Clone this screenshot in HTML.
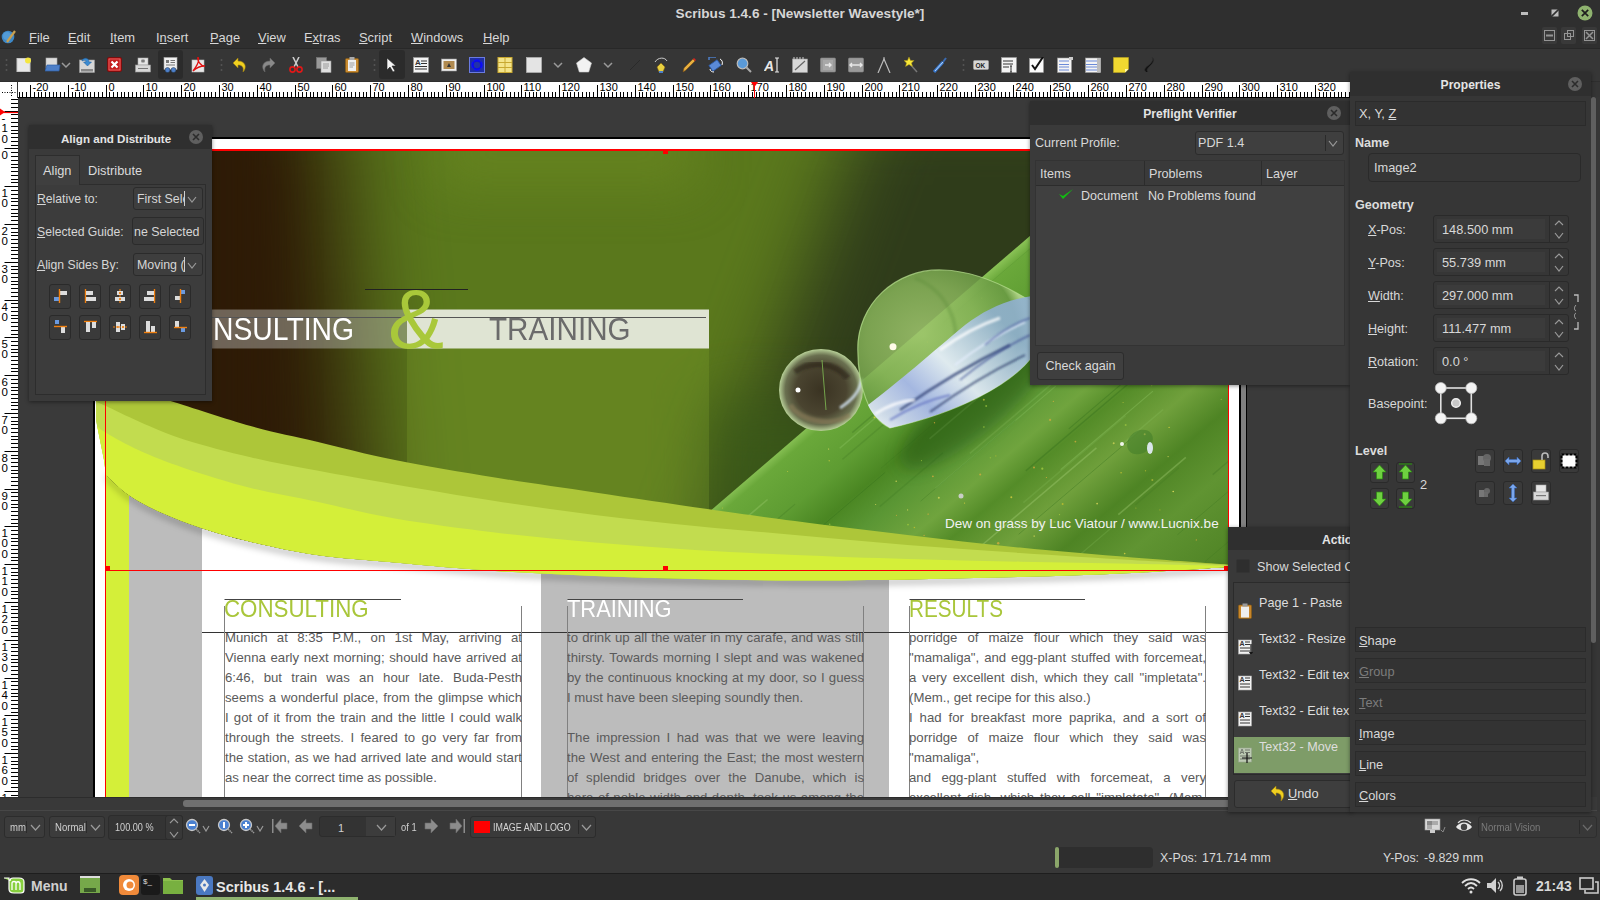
<!DOCTYPE html>
<html><head><meta charset="utf-8">
<style>
*{box-sizing:border-box;margin:0;padding:0}
html,body{width:1600px;height:900px;overflow:hidden;background:#353535;font-family:"Liberation Sans",sans-serif;font-size:13px;color:#dcdcdc}
.a{position:absolute}
#titlebar{left:0;top:0;width:1600px;height:28px;background:#2f2f2f}
#menubar{left:0;top:28px;width:1600px;height:20px;background:#2f2f2f;border-bottom:1px solid #262626}
#toolbar{left:0;top:48px;width:1600px;height:33px;background:#363636}
#hruler{left:18px;top:81px;width:1332px;height:17px;background:#fff}
#corner{left:0;top:81px;width:18px;height:17px;background:#fff}
#vruler{left:0;top:98px;width:18px;height:699px;background:#fff}
#canvas{left:18px;top:98px;width:1332px;height:699px;background:#3a3a3a;overflow:hidden}
#hscroll{left:0;top:797px;width:1600px;height:14px;background:#393939;border-top:1px solid #2a2a2a}
#status{left:0;top:811px;width:1600px;height:62px;background:#383838;border-top:1px solid #474747}
#taskbar{left:0;top:873px;width:1600px;height:27px;background:#2b2b2b;border-top:1px solid #202020}
.menu span{position:absolute;top:2px;font-size:13px;color:#e0e0e0}
.panel{position:absolute;background:#3a3a3a;box-shadow:0 0 4px rgba(0,0,0,.5)}
.ptitle{position:absolute;left:0;top:0;right:0;height:24px;background:#2f2f2f;font-weight:bold;text-align:center;line-height:24px;font-size:12.5px;color:#e8e8e8}
.closeb{position:absolute;width:15px;height:15px;border-radius:50%;background:#6a6a6a}
.closeb:before,.closeb:after{content:"";position:absolute;left:3px;top:7px;width:9px;height:1.5px;background:#2f2f2f;transform:rotate(45deg)}
.closeb:after{transform:rotate(-45deg)}
.combo{position:absolute;background:#3f3f3f;border:1px solid #2c2c2c;border-radius:3px;color:#e0e0e0;padding-left:5px;white-space:nowrap;overflow:hidden}
.field{position:absolute;background:#353535;border:1px solid #2a2a2a;border-radius:3px}
.sec{position:absolute;left:1355px;width:231px;height:24px;border:1px solid #2c2c2c;background:#353535;padding-left:4px;line-height:22px;font-size:13px;color:#e0e0e0}
.coltxt{position:absolute;font-size:13.2px;line-height:20px;color:#5a5a5a;text-align:justify;text-align-last:justify}
.coltxt div{height:20px;white-space:nowrap;overflow:hidden}
</style></head><body>
<div class="a" style="left:0;top:0;width:1600px;height:28px;background:#2f2f2f"></div>
<div class="a" style="left:0;top:5px;width:1600px;text-align:center;font-weight:bold;font-size:13.6px;color:#d6d6d6;line-height:18px">Scribus 1.4.6 - [Newsletter Wavestyle*]</div>
<div class="a" style="left:1521px;top:12px;width:7px;height:3px;background:#bdbdbd"></div>
<svg class="a" style="left:1551px;top:9px" width="8" height="8"><rect x="0.5" y="0.5" width="7" height="7" fill="#bdbdbd"/><path d="M0,8 L8,0" stroke="#2f2f2f" stroke-width="1.6"/></svg>
<svg class="a" style="left:1577px;top:5px" width="16" height="16"><circle cx="8" cy="8" r="7.5" fill="#8fb36f"/><path d="M4.8,4.8 L11.2,11.2 M11.2,4.8 L4.8,11.2" stroke="#1e1e1e" stroke-width="1.7"/></svg>
<div class="a" style="left:0;top:28px;width:1600px;height:20px;background:#2f2f2f"></div>
<div class="a" style="left:0;top:48px;width:1600px;height:1px;background:#282828"></div>
<svg class="a" style="left:1px;top:29px" width="15" height="15"><circle cx="7" cy="8" r="6.3" fill="#3d88c8"/><circle cx="6" cy="7" r="4" fill="#62a8e0" opacity="0.6"/><path d="M6,13 L14,2" stroke="#c8a050" stroke-width="2.2"/></svg>
<div class="a" style="left:29px;top:30px;font-size:12.9px;color:#d8d8d8;line-height:16px;white-space:nowrap"><u>F</u>ile</div>
<div class="a" style="left:68px;top:30px;font-size:12.9px;color:#d8d8d8;line-height:16px;white-space:nowrap"><u>E</u>dit</div>
<div class="a" style="left:110px;top:30px;font-size:12.9px;color:#d8d8d8;line-height:16px;white-space:nowrap"><u>I</u>tem</div>
<div class="a" style="left:156px;top:30px;font-size:12.9px;color:#d8d8d8;line-height:16px;white-space:nowrap">I<u>n</u>sert</div>
<div class="a" style="left:210px;top:30px;font-size:12.9px;color:#d8d8d8;line-height:16px;white-space:nowrap"><u>P</u>age</div>
<div class="a" style="left:258px;top:30px;font-size:12.9px;color:#d8d8d8;line-height:16px;white-space:nowrap"><u>V</u>iew</div>
<div class="a" style="left:304px;top:30px;font-size:12.9px;color:#d8d8d8;line-height:16px;white-space:nowrap">E<u>x</u>tras</div>
<div class="a" style="left:359px;top:30px;font-size:12.9px;color:#d8d8d8;line-height:16px;white-space:nowrap"><u>S</u>cript</div>
<div class="a" style="left:411px;top:30px;font-size:12.9px;color:#d8d8d8;line-height:16px;white-space:nowrap"><u>W</u>indows</div>
<div class="a" style="left:483px;top:30px;font-size:12.9px;color:#d8d8d8;line-height:16px;white-space:nowrap"><u>H</u>elp</div>
<div class="a" style="left:1542px;top:27px;width:15px;height:17px;background:#393939;border-radius:2px"></div>
<div class="a" style="left:1561px;top:27px;width:15px;height:17px;background:#393939;border-radius:2px"></div>
<div class="a" style="left:1582px;top:27px;width:15px;height:17px;background:#393939;border-radius:2px"></div>
<svg class="a" style="left:1542px;top:27px" width="56" height="17"><g stroke="#959595" fill="none" stroke-width="1"><rect x="2.5" y="3.5" width="10" height="10"/><line x1="4" y1="8.5" x2="11" y2="8.5" stroke-width="2"/><rect x="22.5" y="6.5" width="6" height="6"/><rect x="25.5" y="3.5" width="6" height="6"/><rect x="42.5" y="3.5" width="10" height="10"/><path d="M44,5 L51,12 M51,5 L44,12" stroke-width="1.5"/></g></svg>
<div class="a" style="left:0;top:49px;width:1600px;height:32px;background:#363636"></div>
<div class="a" style="left:0;top:81px;width:1600px;height:1px;background:#2e2e2e"></div>
<svg class="a" style="left:0;top:82px" width="1350" height="16" viewBox="0 82 1350 16">
<rect x="0" y="82" width="17" height="16" fill="#fff"/>
<path d="M11.5,85 V96 M2,92.5 H16" stroke="#000" stroke-width="1" stroke-dasharray="1,1.5"/>
<rect x="18" y="82" width="1332" height="16" fill="#fff"/>
<line x1="18" y1="97.5" x2="1350" y2="97.5" stroke="#000" stroke-width="1"/>
<path d="M19.5,92 V98 M22.5,92 V98 M26.5,92 V98 M30.5,85 V98 M34.5,92 V98 M38.5,92 V98 M41.5,92 V98 M45.5,92 V98 M49.5,92 V98 M53.5,92 V98 M56.5,92 V98 M60.5,92 V98 M64.5,92 V98 M68.5,85 V98 M72.5,92 V98 M75.5,92 V98 M79.5,92 V98 M83.5,92 V98 M87.5,92 V98 M90.5,92 V98 M94.5,92 V98 M98.5,92 V98 M102.5,92 V98 M106.5,85 V98 M109.5,92 V98 M113.5,92 V98 M117.5,92 V98 M121.5,92 V98 M124.5,92 V98 M128.5,92 V98 M132.5,92 V98 M136.5,92 V98 M140.5,92 V98 M143.5,85 V98 M147.5,92 V98 M151.5,92 V98 M155.5,92 V98 M159.5,92 V98 M162.5,92 V98 M166.5,92 V98 M170.5,92 V98 M174.5,92 V98 M177.5,92 V98 M181.5,85 V98 M185.5,92 V98 M189.5,92 V98 M193.5,92 V98 M196.5,92 V98 M200.5,92 V98 M204.5,92 V98 M208.5,92 V98 M211.5,92 V98 M215.5,92 V98 M219.5,85 V98 M223.5,92 V98 M227.5,92 V98 M230.5,92 V98 M234.5,92 V98 M238.5,92 V98 M242.5,92 V98 M245.5,92 V98 M249.5,92 V98 M253.5,92 V98 M257.5,85 V98 M261.5,92 V98 M264.5,92 V98 M268.5,92 V98 M272.5,92 V98 M276.5,92 V98 M279.5,92 V98 M283.5,92 V98 M287.5,92 V98 M291.5,92 V98 M295.5,85 V98 M298.5,92 V98 M302.5,92 V98 M306.5,92 V98 M310.5,92 V98 M313.5,92 V98 M317.5,92 V98 M321.5,92 V98 M325.5,92 V98 M329.5,92 V98 M332.5,85 V98 M336.5,92 V98 M340.5,92 V98 M344.5,92 V98 M347.5,92 V98 M351.5,92 V98 M355.5,92 V98 M359.5,92 V98 M363.5,92 V98 M366.5,92 V98 M370.5,85 V98 M374.5,92 V98 M378.5,92 V98 M382.5,92 V98 M385.5,92 V98 M389.5,92 V98 M393.5,92 V98 M397.5,92 V98 M400.5,92 V98 M404.5,92 V98 M408.5,85 V98 M412.5,92 V98 M416.5,92 V98 M419.5,92 V98 M423.5,92 V98 M427.5,92 V98 M431.5,92 V98 M434.5,92 V98 M438.5,92 V98 M442.5,92 V98 M446.5,85 V98 M450.5,92 V98 M453.5,92 V98 M457.5,92 V98 M461.5,92 V98 M465.5,92 V98 M468.5,92 V98 M472.5,92 V98 M476.5,92 V98 M480.5,92 V98 M484.5,85 V98 M487.5,92 V98 M491.5,92 V98 M495.5,92 V98 M499.5,92 V98 M502.5,92 V98 M506.5,92 V98 M510.5,92 V98 M514.5,92 V98 M518.5,92 V98 M521.5,85 V98 M525.5,92 V98 M529.5,92 V98 M533.5,92 V98 M536.5,92 V98 M540.5,92 V98 M544.5,92 V98 M548.5,92 V98 M552.5,92 V98 M555.5,92 V98 M559.5,85 V98 M563.5,92 V98 M567.5,92 V98 M570.5,92 V98 M574.5,92 V98 M578.5,92 V98 M582.5,92 V98 M586.5,92 V98 M589.5,92 V98 M593.5,92 V98 M597.5,85 V98 M601.5,92 V98 M604.5,92 V98 M608.5,92 V98 M612.5,92 V98 M616.5,92 V98 M620.5,92 V98 M623.5,92 V98 M627.5,92 V98 M631.5,92 V98 M635.5,85 V98 M639.5,92 V98 M642.5,92 V98 M646.5,92 V98 M650.5,92 V98 M654.5,92 V98 M657.5,92 V98 M661.5,92 V98 M665.5,92 V98 M669.5,92 V98 M673.5,85 V98 M676.5,92 V98 M680.5,92 V98 M684.5,92 V98 M688.5,92 V98 M691.5,92 V98 M695.5,92 V98 M699.5,92 V98 M703.5,92 V98 M707.5,92 V98 M710.5,85 V98 M714.5,92 V98 M718.5,92 V98 M722.5,92 V98 M725.5,92 V98 M729.5,92 V98 M733.5,92 V98 M737.5,92 V98 M741.5,92 V98 M744.5,92 V98 M748.5,85 V98 M752.5,92 V98 M756.5,92 V98 M759.5,92 V98 M763.5,92 V98 M767.5,92 V98 M771.5,92 V98 M775.5,92 V98 M778.5,92 V98 M782.5,92 V98 M786.5,85 V98 M790.5,92 V98 M793.5,92 V98 M797.5,92 V98 M801.5,92 V98 M805.5,92 V98 M809.5,92 V98 M812.5,92 V98 M816.5,92 V98 M820.5,92 V98 M824.5,85 V98 M827.5,92 V98 M831.5,92 V98 M835.5,92 V98 M839.5,92 V98 M843.5,92 V98 M846.5,92 V98 M850.5,92 V98 M854.5,92 V98 M858.5,92 V98 M862.5,85 V98 M865.5,92 V98 M869.5,92 V98 M873.5,92 V98 M877.5,92 V98 M880.5,92 V98 M884.5,92 V98 M888.5,92 V98 M892.5,92 V98 M896.5,92 V98 M899.5,85 V98 M903.5,92 V98 M907.5,92 V98 M911.5,92 V98 M914.5,92 V98 M918.5,92 V98 M922.5,92 V98 M926.5,92 V98 M930.5,92 V98 M933.5,92 V98 M937.5,85 V98 M941.5,92 V98 M945.5,92 V98 M948.5,92 V98 M952.5,92 V98 M956.5,92 V98 M960.5,92 V98 M964.5,92 V98 M967.5,92 V98 M971.5,92 V98 M975.5,85 V98 M979.5,92 V98 M982.5,92 V98 M986.5,92 V98 M990.5,92 V98 M994.5,92 V98 M998.5,92 V98 M1001.5,92 V98 M1005.5,92 V98 M1009.5,92 V98 M1013.5,85 V98 M1016.5,92 V98 M1020.5,92 V98 M1024.5,92 V98 M1028.5,92 V98 M1032.5,92 V98 M1035.5,92 V98 M1039.5,92 V98 M1043.5,92 V98 M1047.5,92 V98 M1050.5,85 V98 M1054.5,92 V98 M1058.5,92 V98 M1062.5,92 V98 M1066.5,92 V98 M1069.5,92 V98 M1073.5,92 V98 M1077.5,92 V98 M1081.5,92 V98 M1084.5,92 V98 M1088.5,85 V98 M1092.5,92 V98 M1096.5,92 V98 M1100.5,92 V98 M1103.5,92 V98 M1107.5,92 V98 M1111.5,92 V98 M1115.5,92 V98 M1119.5,92 V98 M1122.5,92 V98 M1126.5,85 V98 M1130.5,92 V98 M1134.5,92 V98 M1137.5,92 V98 M1141.5,92 V98 M1145.5,92 V98 M1149.5,92 V98 M1153.5,92 V98 M1156.5,92 V98 M1160.5,92 V98 M1164.5,85 V98 M1168.5,92 V98 M1171.5,92 V98 M1175.5,92 V98 M1179.5,92 V98 M1183.5,92 V98 M1187.5,92 V98 M1190.5,92 V98 M1194.5,92 V98 M1198.5,92 V98 M1202.5,85 V98 M1205.5,92 V98 M1209.5,92 V98 M1213.5,92 V98 M1217.5,92 V98 M1221.5,92 V98 M1224.5,92 V98 M1228.5,92 V98 M1232.5,92 V98 M1236.5,92 V98 M1239.5,85 V98 M1243.5,92 V98 M1247.5,92 V98 M1251.5,92 V98 M1255.5,92 V98 M1258.5,92 V98 M1262.5,92 V98 M1266.5,92 V98 M1270.5,92 V98 M1273.5,92 V98 M1277.5,85 V98 M1281.5,92 V98 M1285.5,92 V98 M1289.5,92 V98 M1292.5,92 V98 M1296.5,92 V98 M1300.5,92 V98 M1304.5,92 V98 M1307.5,92 V98 M1311.5,92 V98 M1315.5,85 V98 M1319.5,92 V98 M1323.5,92 V98 M1326.5,92 V98 M1330.5,92 V98 M1334.5,92 V98 M1338.5,92 V98 M1341.5,92 V98 M1345.5,92 V98 M1349.5,92 V98 " stroke="#000" stroke-width="1"/>
<text x="32.5" y="91.2" font-size="11" fill="#000" font-family="Liberation Sans">-20</text>
<text x="70.5" y="91.2" font-size="11" fill="#000" font-family="Liberation Sans">-10</text>
<text x="108.5" y="91.2" font-size="11" fill="#000" font-family="Liberation Sans">0</text>
<text x="145.5" y="91.2" font-size="11" fill="#000" font-family="Liberation Sans">10</text>
<text x="183.5" y="91.2" font-size="11" fill="#000" font-family="Liberation Sans">20</text>
<text x="221.5" y="91.2" font-size="11" fill="#000" font-family="Liberation Sans">30</text>
<text x="259.5" y="91.2" font-size="11" fill="#000" font-family="Liberation Sans">40</text>
<text x="297.5" y="91.2" font-size="11" fill="#000" font-family="Liberation Sans">50</text>
<text x="334.5" y="91.2" font-size="11" fill="#000" font-family="Liberation Sans">60</text>
<text x="372.5" y="91.2" font-size="11" fill="#000" font-family="Liberation Sans">70</text>
<text x="410.5" y="91.2" font-size="11" fill="#000" font-family="Liberation Sans">80</text>
<text x="448.5" y="91.2" font-size="11" fill="#000" font-family="Liberation Sans">90</text>
<text x="486.5" y="91.2" font-size="11" fill="#000" font-family="Liberation Sans">100</text>
<text x="523.5" y="91.2" font-size="11" fill="#000" font-family="Liberation Sans">110</text>
<text x="561.5" y="91.2" font-size="11" fill="#000" font-family="Liberation Sans">120</text>
<text x="599.5" y="91.2" font-size="11" fill="#000" font-family="Liberation Sans">130</text>
<text x="637.5" y="91.2" font-size="11" fill="#000" font-family="Liberation Sans">140</text>
<text x="675.5" y="91.2" font-size="11" fill="#000" font-family="Liberation Sans">150</text>
<text x="712.5" y="91.2" font-size="11" fill="#000" font-family="Liberation Sans">160</text>
<text x="750.5" y="91.2" font-size="11" fill="#000" font-family="Liberation Sans">170</text>
<text x="788.5" y="91.2" font-size="11" fill="#000" font-family="Liberation Sans">180</text>
<text x="826.5" y="91.2" font-size="11" fill="#000" font-family="Liberation Sans">190</text>
<text x="864.5" y="91.2" font-size="11" fill="#000" font-family="Liberation Sans">200</text>
<text x="901.5" y="91.2" font-size="11" fill="#000" font-family="Liberation Sans">210</text>
<text x="939.5" y="91.2" font-size="11" fill="#000" font-family="Liberation Sans">220</text>
<text x="977.5" y="91.2" font-size="11" fill="#000" font-family="Liberation Sans">230</text>
<text x="1015.5" y="91.2" font-size="11" fill="#000" font-family="Liberation Sans">240</text>
<text x="1052.5" y="91.2" font-size="11" fill="#000" font-family="Liberation Sans">250</text>
<text x="1090.5" y="91.2" font-size="11" fill="#000" font-family="Liberation Sans">260</text>
<text x="1128.5" y="91.2" font-size="11" fill="#000" font-family="Liberation Sans">270</text>
<text x="1166.5" y="91.2" font-size="11" fill="#000" font-family="Liberation Sans">280</text>
<text x="1204.5" y="91.2" font-size="11" fill="#000" font-family="Liberation Sans">290</text>
<text x="1241.5" y="91.2" font-size="11" fill="#000" font-family="Liberation Sans">300</text>
<text x="1279.5" y="91.2" font-size="11" fill="#000" font-family="Liberation Sans">310</text>
<text x="1317.5" y="91.2" font-size="11" fill="#000" font-family="Liberation Sans">320</text>
<path d="M751,82 L758,82 L754.5,87 Z" fill="#f00"/><line x1="754.5" y1="82" x2="754.5" y2="98" stroke="#f00"/>
</svg>
<svg class="a" style="left:0;top:98px" width="18" height="699" viewBox="0 98 18 699">
<rect x="0" y="98" width="18" height="699" fill="#fff"/>
<path d="M11,99.5 H18 M11,103.5 H18 M11,107.5 H18 M4.5,111.5 H18 M11,114.5 H18 M11,118.5 H18 M11,122.5 H18 M11,126.5 H18 M11,130.5 H18 M11,133.5 H18 M11,137.5 H18 M11,141.5 H18 M11,145.5 H18 M4.5,148.5 H18 M11,152.5 H18 M11,156.5 H18 M11,160.5 H18 M11,164.5 H18 M11,167.5 H18 M11,171.5 H18 M11,175.5 H18 M11,179.5 H18 M11,182.5 H18 M4.5,186.5 H18 M11,190.5 H18 M11,194.5 H18 M11,198.5 H18 M11,201.5 H18 M11,205.5 H18 M11,209.5 H18 M11,213.5 H18 M11,216.5 H18 M11,220.5 H18 M4.5,224.5 H18 M11,228.5 H18 M11,232.5 H18 M11,235.5 H18 M11,239.5 H18 M11,243.5 H18 M11,247.5 H18 M11,250.5 H18 M11,254.5 H18 M11,258.5 H18 M4.5,262.5 H18 M11,266.5 H18 M11,269.5 H18 M11,273.5 H18 M11,277.5 H18 M11,281.5 H18 M11,284.5 H18 M11,288.5 H18 M11,292.5 H18 M11,296.5 H18 M4.5,300.5 H18 M11,303.5 H18 M11,307.5 H18 M11,311.5 H18 M11,315.5 H18 M11,318.5 H18 M11,322.5 H18 M11,326.5 H18 M11,330.5 H18 M11,334.5 H18 M4.5,337.5 H18 M11,341.5 H18 M11,345.5 H18 M11,349.5 H18 M11,352.5 H18 M11,356.5 H18 M11,360.5 H18 M11,364.5 H18 M11,368.5 H18 M11,371.5 H18 M4.5,375.5 H18 M11,379.5 H18 M11,383.5 H18 M11,387.5 H18 M11,390.5 H18 M11,394.5 H18 M11,398.5 H18 M11,402.5 H18 M11,405.5 H18 M11,409.5 H18 M4.5,413.5 H18 M11,417.5 H18 M11,421.5 H18 M11,424.5 H18 M11,428.5 H18 M11,432.5 H18 M11,436.5 H18 M11,439.5 H18 M11,443.5 H18 M11,447.5 H18 M4.5,451.5 H18 M11,455.5 H18 M11,458.5 H18 M11,462.5 H18 M11,466.5 H18 M11,470.5 H18 M11,473.5 H18 M11,477.5 H18 M11,481.5 H18 M11,485.5 H18 M4.5,489.5 H18 M11,492.5 H18 M11,496.5 H18 M11,500.5 H18 M11,504.5 H18 M11,507.5 H18 M11,511.5 H18 M11,515.5 H18 M11,519.5 H18 M11,523.5 H18 M4.5,526.5 H18 M11,530.5 H18 M11,534.5 H18 M11,538.5 H18 M11,541.5 H18 M11,545.5 H18 M11,549.5 H18 M11,553.5 H18 M11,557.5 H18 M11,560.5 H18 M4.5,564.5 H18 M11,568.5 H18 M11,572.5 H18 M11,575.5 H18 M11,579.5 H18 M11,583.5 H18 M11,587.5 H18 M11,591.5 H18 M11,594.5 H18 M11,598.5 H18 M4.5,602.5 H18 M11,606.5 H18 M11,609.5 H18 M11,613.5 H18 M11,617.5 H18 M11,621.5 H18 M11,625.5 H18 M11,628.5 H18 M11,632.5 H18 M11,636.5 H18 M4.5,640.5 H18 M11,644.5 H18 M11,647.5 H18 M11,651.5 H18 M11,655.5 H18 M11,659.5 H18 M11,662.5 H18 M11,666.5 H18 M11,670.5 H18 M11,674.5 H18 M4.5,678.5 H18 M11,681.5 H18 M11,685.5 H18 M11,689.5 H18 M11,693.5 H18 M11,696.5 H18 M11,700.5 H18 M11,704.5 H18 M11,708.5 H18 M11,712.5 H18 M4.5,715.5 H18 M11,719.5 H18 M11,723.5 H18 M11,727.5 H18 M11,730.5 H18 M11,734.5 H18 M11,738.5 H18 M11,742.5 H18 M11,746.5 H18 M11,749.5 H18 M4.5,753.5 H18 M11,757.5 H18 M11,761.5 H18 M11,764.5 H18 M11,768.5 H18 M11,772.5 H18 M11,776.5 H18 M11,780.5 H18 M11,783.5 H18 M11,787.5 H18 M4.5,791.5 H18 M11,795.5 H18 " stroke="#000" stroke-width="1"/>
<text x="1.5" y="121.5" font-size="11.5" fill="#000" font-family="Liberation Sans">-</text>
<text x="1.5" y="132.1" font-size="11.5" fill="#000" font-family="Liberation Sans">1</text>
<text x="1.5" y="142.7" font-size="11.5" fill="#000" font-family="Liberation Sans">0</text>
<text x="1.5" y="158.5" font-size="11.5" fill="#000" font-family="Liberation Sans">0</text>
<text x="1.5" y="196.5" font-size="11.5" fill="#000" font-family="Liberation Sans">1</text>
<text x="1.5" y="207.1" font-size="11.5" fill="#000" font-family="Liberation Sans">0</text>
<text x="1.5" y="234.5" font-size="11.5" fill="#000" font-family="Liberation Sans">2</text>
<text x="1.5" y="245.1" font-size="11.5" fill="#000" font-family="Liberation Sans">0</text>
<text x="1.5" y="272.5" font-size="11.5" fill="#000" font-family="Liberation Sans">3</text>
<text x="1.5" y="283.1" font-size="11.5" fill="#000" font-family="Liberation Sans">0</text>
<text x="1.5" y="310.5" font-size="11.5" fill="#000" font-family="Liberation Sans">4</text>
<text x="1.5" y="321.1" font-size="11.5" fill="#000" font-family="Liberation Sans">0</text>
<text x="1.5" y="347.5" font-size="11.5" fill="#000" font-family="Liberation Sans">5</text>
<text x="1.5" y="358.1" font-size="11.5" fill="#000" font-family="Liberation Sans">0</text>
<text x="1.5" y="385.5" font-size="11.5" fill="#000" font-family="Liberation Sans">6</text>
<text x="1.5" y="396.1" font-size="11.5" fill="#000" font-family="Liberation Sans">0</text>
<text x="1.5" y="423.5" font-size="11.5" fill="#000" font-family="Liberation Sans">7</text>
<text x="1.5" y="434.1" font-size="11.5" fill="#000" font-family="Liberation Sans">0</text>
<text x="1.5" y="461.5" font-size="11.5" fill="#000" font-family="Liberation Sans">8</text>
<text x="1.5" y="472.1" font-size="11.5" fill="#000" font-family="Liberation Sans">0</text>
<text x="1.5" y="499.5" font-size="11.5" fill="#000" font-family="Liberation Sans">9</text>
<text x="1.5" y="510.1" font-size="11.5" fill="#000" font-family="Liberation Sans">0</text>
<text x="1.5" y="536.5" font-size="11.5" fill="#000" font-family="Liberation Sans">1</text>
<text x="1.5" y="547.1" font-size="11.5" fill="#000" font-family="Liberation Sans">0</text>
<text x="1.5" y="557.7" font-size="11.5" fill="#000" font-family="Liberation Sans">0</text>
<text x="1.5" y="574.5" font-size="11.5" fill="#000" font-family="Liberation Sans">1</text>
<text x="1.5" y="585.1" font-size="11.5" fill="#000" font-family="Liberation Sans">1</text>
<text x="1.5" y="595.7" font-size="11.5" fill="#000" font-family="Liberation Sans">0</text>
<text x="1.5" y="612.5" font-size="11.5" fill="#000" font-family="Liberation Sans">1</text>
<text x="1.5" y="623.1" font-size="11.5" fill="#000" font-family="Liberation Sans">2</text>
<text x="1.5" y="633.7" font-size="11.5" fill="#000" font-family="Liberation Sans">0</text>
<text x="1.5" y="650.5" font-size="11.5" fill="#000" font-family="Liberation Sans">1</text>
<text x="1.5" y="661.1" font-size="11.5" fill="#000" font-family="Liberation Sans">3</text>
<text x="1.5" y="671.7" font-size="11.5" fill="#000" font-family="Liberation Sans">0</text>
<text x="1.5" y="688.5" font-size="11.5" fill="#000" font-family="Liberation Sans">1</text>
<text x="1.5" y="699.1" font-size="11.5" fill="#000" font-family="Liberation Sans">4</text>
<text x="1.5" y="709.7" font-size="11.5" fill="#000" font-family="Liberation Sans">0</text>
<text x="1.5" y="725.5" font-size="11.5" fill="#000" font-family="Liberation Sans">1</text>
<text x="1.5" y="736.1" font-size="11.5" fill="#000" font-family="Liberation Sans">5</text>
<text x="1.5" y="746.7" font-size="11.5" fill="#000" font-family="Liberation Sans">0</text>
<text x="1.5" y="763.5" font-size="11.5" fill="#000" font-family="Liberation Sans">1</text>
<text x="1.5" y="774.1" font-size="11.5" fill="#000" font-family="Liberation Sans">6</text>
<text x="1.5" y="784.7" font-size="11.5" fill="#000" font-family="Liberation Sans">0</text>
<text x="1.5" y="801.5" font-size="11.5" fill="#000" font-family="Liberation Sans">1</text>
<text x="1.5" y="812.1" font-size="11.5" fill="#000" font-family="Liberation Sans">7</text>
<text x="1.5" y="822.7" font-size="11.5" fill="#000" font-family="Liberation Sans">0</text>
<path d="M0,108.5 L5,112 L0,115.5 Z" fill="#f00"/><line x1="0" y1="112.5" x2="18" y2="112.5" stroke="#f00" stroke-width="1.2"/>
</svg>
<div class="a" style="left:158px;top:50px;width:25px;height:29px;background:#2b2b2b;border-radius:3px"></div>
<div class="a" style="left:379px;top:50px;width:26px;height:29px;background:#2b2b2b;border-radius:3px"></div>
<svg class="a" style="left:16px;top:57px" width="16" height="16" viewBox="0 0 16 16"><rect x="1" y="1.5" width="13" height="13" fill="#e8e8e8" stroke="#c8c8c8"/><circle cx="12" cy="3.5" r="3" fill="#f4e640"/></svg>
<svg class="a" style="left:45px;top:57px" width="16" height="16" viewBox="0 0 16 16"><rect x="1" y="1" width="11" height="10" fill="#ddd" stroke="#aaa" stroke-width=".6"/><path d="M0,14 L2,8 L15,8 L14,14 Z" fill="#4d7fc8" stroke="#2d5fa8" stroke-width=".7"/></svg>
<svg class="a" style="left:79px;top:57px" width="16" height="16" viewBox="0 0 16 16"><rect x="0.5" y="3" width="15" height="12.5" fill="#d6d6d6" stroke="#999" stroke-width=".6"/><rect x="2" y="12" width="12" height="2.5" fill="#888"/><path d="M3,3 C6,0 10,1 10,5 L12.5,5 L8.5,9 L4.5,5 L7,5 C7,3 5,3 3,4 Z" fill="#3a8ad0" stroke="#1a5a9a" stroke-width=".5"/></svg>
<svg class="a" style="left:107px;top:57px" width="16" height="16" viewBox="0 0 16 16"><rect x="0.5" y="0.5" width="14" height="14" rx="1.5" fill="#c41c1c" stroke="#7a0e0e"/><rect x="2" y="2" width="11" height="11" fill="none" stroke="#e88" stroke-width=".6"/><path d="M4.5,4.5 L10.5,10.5 M10.5,4.5 L4.5,10.5" stroke="#fff" stroke-width="2.2"/></svg>
<svg class="a" style="left:135px;top:57px" width="16" height="16" viewBox="0 0 16 16"><rect x="3" y="1" width="10" height="7" fill="#e6e6e6" stroke="#aaa" stroke-width=".6"/><path d="M8,2 V6 M6,3 L10,5 M10,3 L6,5" stroke="#666" stroke-width=".8"/><rect x="0.5" y="8" width="15" height="7" fill="#d8d8d8" stroke="#999" stroke-width=".6"/><rect x="3" y="11" width="10" height="1" fill="#777"/></svg>
<svg class="a" style="left:163px;top:57px" width="16" height="16" viewBox="0 0 16 16"><rect x="1" y="0.5" width="13" height="12" fill="#f0f0f0" stroke="#aaa" stroke-width=".6"/><rect x="3" y="3" width="3" height="3" fill="#777"/><path d="M7.5,3.5 H12 M7.5,5.5 H12 M3,8 H12" stroke="#777" stroke-width="1"/><circle cx="4.5" cy="13" r="2.5" fill="#4d7fc8" stroke="#234" stroke-width=".5"/><circle cx="10.5" cy="13" r="2.5" fill="#4d7fc8" stroke="#234" stroke-width=".5"/></svg>
<svg class="a" style="left:191px;top:57px" width="16" height="16" viewBox="0 0 16 16"><rect x="1" y="3" width="12" height="12" fill="#e8e8e8" stroke="#bbb" stroke-width=".6"/><path d="M2,14 C6,9 9,4 7,0 C6,3 9,9 14,9 C10,9 5,11 2,14" fill="none" stroke="#e01010" stroke-width="1.3"/></svg>
<svg class="a" style="left:232px;top:57px" width="16" height="16" viewBox="0 0 16 16"><path d="M6,1 L1,6 L6,11 L6,8 C10,8 12,10 11,15 C15,11 14,4 6,4 Z" fill="#f0d020" stroke="#a08010" stroke-width=".6"/></svg>
<svg class="a" style="left:260px;top:57px" width="16" height="16" viewBox="0 0 16 16"><path d="M10,1 L15,6 L10,11 L10,8 C6,8 4,10 5,15 C1,11 2,4 10,4 Z" fill="#8a8a8a" stroke="#666" stroke-width=".6"/></svg>
<svg class="a" style="left:288px;top:57px" width="16" height="16" viewBox="0 0 16 16"><path d="M5,0 L10,10 M11,0 L6,10" stroke="#ccc" stroke-width="1.6"/><circle cx="4.5" cy="12.5" r="2.6" fill="none" stroke="#e01818" stroke-width="1.6"/><circle cx="11.5" cy="12.5" r="2.6" fill="none" stroke="#e01818" stroke-width="1.6"/></svg>
<svg class="a" style="left:316px;top:57px" width="16" height="16" viewBox="0 0 16 16"><rect x="0.5" y="0.5" width="10" height="11" fill="#999" stroke="#777" stroke-width=".6"/><rect x="5" y="4" width="10" height="11.5" fill="#e0e0e0" stroke="#999" stroke-width=".6"/><path d="M7,7 H13 M7,9 H13 M7,11 H12" stroke="#888" stroke-width=".8"/></svg>
<svg class="a" style="left:344px;top:57px" width="16" height="16" viewBox="0 0 16 16"><rect x="1.5" y="1.5" width="13" height="14" rx="1" fill="#c88a30" stroke="#8a5a10" stroke-width=".6"/><rect x="4" y="3" width="8" height="11" fill="#f0f0f0"/><rect x="5.5" y="0" width="5" height="3" fill="#aaa"/><path d="M5.5,6 H10.5 M5.5,8 H10.5 M5.5,10 H9" stroke="#888" stroke-width=".8"/></svg>
<svg class="a" style="left:384px;top:57px" width="16" height="16" viewBox="0 0 16 16"><path d="M3,1 L3,13 L6,10 L9,15 L11,14 L8,9 L12,9 Z" fill="#f4f4f4" stroke="#222" stroke-width=".6"/></svg>
<svg class="a" style="left:413px;top:57px" width="16" height="16" viewBox="0 0 16 16"><rect x="0.5" y="0.5" width="15" height="15" fill="#f4f4f4" stroke="#999" stroke-width=".6"/><text x="2" y="8" font-size="8" font-weight="bold" fill="#333" font-family="Liberation Sans">A</text><path d="M8,4 H14 M8,6.5 H14 M2,9.5 H14 M2,12 H14" stroke="#333" stroke-width="1"/></svg>
<svg class="a" style="left:441px;top:57px" width="16" height="16" viewBox="0 0 16 16"><rect x="0.5" y="2" width="15" height="12" fill="#f0f0f0" stroke="#999" stroke-width=".6"/><rect x="2.5" y="4" width="11" height="8" fill="#b08a50"/><path d="M6,10 L8,6 L10,10 Z" fill="#333"/></svg>
<svg class="a" style="left:469px;top:57px" width="16" height="16" viewBox="0 0 16 16"><rect x="0.5" y="0.5" width="15" height="15" fill="#2030a0" stroke="#6a7ae0" stroke-width="1"/><circle cx="8" cy="8" r="4.5" fill="none" stroke="#1010ff" stroke-width="2.5"/><rect x="4" y="4" width="8" height="8" fill="#2030a0"/><circle cx="8" cy="8" r="4" fill="#2232a8" stroke="#0a0af0" stroke-width="1.5"/></svg>
<svg class="a" style="left:497px;top:57px" width="16" height="16" viewBox="0 0 16 16"><rect x="1" y="0.5" width="14" height="15" fill="#f4e48a" stroke="#c8a830" stroke-width="1"/><path d="M8,1 V15 M1,5.5 H15 M1,10.5 H15" stroke="#c8a830" stroke-width="1"/></svg>
<svg class="a" style="left:526px;top:57px" width="16" height="16" viewBox="0 0 16 16"><rect x="0.5" y="0.5" width="15" height="15" fill="#e4e4e4" stroke="#bbb" stroke-width=".6"/></svg>
<svg class="a" style="left:576px;top:57px" width="16" height="16" viewBox="0 0 16 16"><path d="M8,0.5 L15.5,6 L12.7,15 L3.3,15 L0.5,6 Z" fill="#f2f2f2" stroke="#ccc" stroke-width=".6"/></svg>
<svg class="a" style="left:627px;top:57px" width="16" height="16" viewBox="0 0 16 16"><path d="M3,13 L13,3" stroke="#2a2a2a" stroke-width="1"/></svg>
<svg class="a" style="left:653px;top:57px" width="16" height="16" viewBox="0 0 16 16"><path d="M2,5 C5,0 12,0 14,4" fill="none" stroke="#ccc" stroke-width="1"/><path d="M8,6 L12,10 L10,15 L6,15 L4,10 Z" fill="#e8d040" stroke="#806010" stroke-width=".6"/><rect x="6" y="14" width="4" height="2" fill="#4d7fc8"/></svg>
<svg class="a" style="left:681px;top:57px" width="16" height="16" viewBox="0 0 16 16"><path d="M2,15 L3,11 L12,2 L14,4 L5,13 Z" fill="#e8b040" stroke="#805010" stroke-width=".6"/><path d="M12,2 L14,4 L15,3 L13,1 Z" fill="#e02020"/></svg>
<svg class="a" style="left:708px;top:57px" width="16" height="16" viewBox="0 0 16 16"><rect x="2" y="5" width="10" height="7" transform="rotate(-35 7 8.5)" fill="#5a8ad8" stroke="#2a5aa8" stroke-width=".8"/><path d="M1,3 L1,0 L8,0" stroke="#4d7fc8" stroke-width="1.5" fill="none"/><path d="M12,2 C14,3 15,5 14,8" stroke="#fff" stroke-width="1" fill="none"/><path d="M2,12 C2,14 4,15 6,15" stroke="#fff" stroke-width="1" fill="none"/></svg>
<svg class="a" style="left:736px;top:57px" width="16" height="16" viewBox="0 0 16 16"><circle cx="6.5" cy="6.5" r="5.3" fill="#5a9ad8" stroke="#bbb" stroke-width="1.2"/><path d="M10.5,10.5 L15,15" stroke="#aaa" stroke-width="2"/></svg>
<svg class="a" style="left:764px;top:57px" width="16" height="16" viewBox="0 0 16 16"><text x="0" y="14" font-size="14" font-weight="bold" font-style="italic" fill="#e8e8e8" font-family="Liberation Sans">A</text><path d="M11,1 H15 M13,1 V15 M11,15 H15" stroke="#e8e8e8" stroke-width="1.2"/></svg>
<svg class="a" style="left:792px;top:57px" width="16" height="16" viewBox="0 0 16 16"><rect x="0.5" y="2" width="15" height="13.5" fill="#d8d8d8" stroke="#999" stroke-width=".6"/><path d="M2,0 V3 M5,0 V3 M8,0 V3 M11,0 V3" stroke="#ccc"/><path d="M3,13 L13,4" stroke="#666" stroke-width="1.2"/></svg>
<svg class="a" style="left:820px;top:57px" width="16" height="16" viewBox="0 0 16 16"><rect x="0.5" y="1" width="15" height="14" rx="1" fill="#9a9a9a" stroke="#888" stroke-width=".6"/><rect x="3" y="3" width="10" height="10" fill="#a8a8a8"/><path d="M5,8 H11 M9,6 L11,8 L9,10" stroke="#e8e8e8" stroke-width="1.4" fill="none"/></svg>
<svg class="a" style="left:848px;top:57px" width="16" height="16" viewBox="0 0 16 16"><rect x="0.5" y="1" width="15" height="14" rx="1" fill="#9a9a9a" stroke="#888" stroke-width=".6"/><path d="M2,8 H14 M4,6 L2,8 L4,10 M12,6 L14,8 L12,10" stroke="#e8e8e8" stroke-width="1.4" fill="none"/></svg>
<svg class="a" style="left:876px;top:57px" width="16" height="16" viewBox="0 0 16 16"><path d="M2,16 L8,2 L14,16" stroke="#bbb" stroke-width="1.2" fill="none"/><path d="M8,0 V4" stroke="#bbb"/></svg>
<svg class="a" style="left:904px;top:57px" width="16" height="16" viewBox="0 0 16 16"><path d="M6,7 L13,15" stroke="#777" stroke-width="1.5"/><path d="M5,0 L6.5,3.5 L10,3.5 L7.5,6 L8.5,9.5 L5,7.5 L1.5,9.5 L2.5,6 L0,3.5 L3.5,3.5 Z" fill="#f8e838" stroke="#a89010" stroke-width=".5"/></svg>
<svg class="a" style="left:932px;top:57px" width="16" height="16" viewBox="0 0 16 16"><path d="M2,15 L11,5" stroke="#3a7ad0" stroke-width="3"/><path d="M3,14 L11,5" stroke="#bcd8f8" stroke-width="1"/><path d="M11,5 L14,1" stroke="#3a6ab0" stroke-width="2"/></svg>
<svg class="a" style="left:973px;top:57px" width="16" height="16" viewBox="0 0 16 16"><rect x="0.5" y="3.5" width="15" height="9" rx="1" fill="#d8d8d8" stroke="#aaa" stroke-width=".6"/><text x="2.5" y="10.5" font-size="6.5" font-weight="bold" fill="#222" font-family="Liberation Sans">OK</text></svg>
<svg class="a" style="left:1001px;top:57px" width="16" height="16" viewBox="0 0 16 16"><rect x="0.5" y="0.5" width="15" height="15" fill="#f4f4f4" stroke="#999" stroke-width=".6"/><path d="M2,4 H12 M2,7 H12 M2,10 H8" stroke="#333" stroke-width="1"/><path d="M10,9 V15 M9,9 H11 M9,15 H11" stroke="#333" stroke-width="1"/></svg>
<svg class="a" style="left:1029px;top:57px" width="16" height="16" viewBox="0 0 16 16"><rect x="0.5" y="1.5" width="14" height="14" fill="#fafafa" stroke="#999" stroke-width=".6"/><path d="M3,8 L6,12 L14,0" stroke="#111" stroke-width="2" fill="none"/></svg>
<svg class="a" style="left:1057px;top:57px" width="16" height="16" viewBox="0 0 16 16"><rect x="0.5" y="1" width="14" height="14.5" fill="#f4f4f4" stroke="#999" stroke-width=".6"/><rect x="12" y="0" width="4" height="3" fill="#ccc"/><path d="M2,4 H12 M2,7.5 H12 M2,10 H12 M2,13 H12" stroke="#6a8ad8" stroke-width="1.2"/></svg>
<svg class="a" style="left:1085px;top:57px" width="16" height="16" viewBox="0 0 16 16"><rect x="0.5" y="1" width="15" height="14.5" fill="#f4f4f4" stroke="#999" stroke-width=".6"/><path d="M1,4 H12 M1,7.5 H12 M1,10 H12 M1,13 H12" stroke="#6a8ad8" stroke-width="1.2"/><rect x="12" y="1" width="3.5" height="14.5" fill="#bbb"/></svg>
<svg class="a" style="left:1113px;top:57px" width="16" height="16" viewBox="0 0 16 16"><path d="M0.5,0.5 H15.5 V12 L12,15.5 H0.5 Z" fill="#f0d830" stroke="#c0a820" stroke-width=".6"/><path d="M12,15.5 V12 H15.5" fill="#fff8b0"/></svg>
<svg class="a" style="left:1142px;top:57px" width="16" height="16" viewBox="0 0 16 16"><path d="M4,15 C0,12 6,9 8,7 C10,5 12,2 10,0 C14,3 10,7 8,9 C6,11 4,13 6,15" fill="#111" stroke="#333" stroke-width=".6"/></svg>
<svg class="a" style="left:61px;top:62px" width="10" height="7"><path d="M1,1 L5,5 L9,1" stroke="#9a9a9a" stroke-width="1.5" fill="none"/></svg>
<svg class="a" style="left:553px;top:62px" width="10" height="7"><path d="M1,1 L5,5 L9,1" stroke="#9a9a9a" stroke-width="1.5" fill="none"/></svg>
<svg class="a" style="left:603px;top:62px" width="10" height="7"><path d="M1,1 L5,5 L9,1" stroke="#9a9a9a" stroke-width="1.5" fill="none"/></svg>
<svg class="a" style="left:5px;top:58px" width="3" height="16"><circle cx="1.5" cy="2" r="1" fill="#555"/><circle cx="1.5" cy="7" r="1" fill="#555"/><circle cx="1.5" cy="12" r="1" fill="#555"/></svg>
<svg class="a" style="left:220px;top:58px" width="3" height="16"><circle cx="1.5" cy="2" r="1" fill="#555"/><circle cx="1.5" cy="7" r="1" fill="#555"/><circle cx="1.5" cy="12" r="1" fill="#555"/></svg>
<svg class="a" style="left:373px;top:58px" width="3" height="16"><circle cx="1.5" cy="2" r="1" fill="#555"/><circle cx="1.5" cy="7" r="1" fill="#555"/><circle cx="1.5" cy="12" r="1" fill="#555"/></svg>
<svg class="a" style="left:962px;top:58px" width="3" height="16"><circle cx="1.5" cy="2" r="1" fill="#555"/><circle cx="1.5" cy="7" r="1" fill="#555"/><circle cx="1.5" cy="12" r="1" fill="#555"/></svg>
<div id="canvas" class="a"><div style="position:absolute;left:-18px;top:-98px;width:1600px;height:900px">
<!-- page -->
<div class="a" style="left:93px;top:137px;width:1148px;height:700px;background:#000"></div>
<div class="a" style="left:95px;top:139px;width:1144px;height:700px;background:#fff"></div>
<div class="a" style="left:1241px;top:139px;width:5px;height:700px;background:#808080"></div>
<div class="a" style="left:1246px;top:139px;width:1px;height:700px;background:#000"></div>
<!-- columns -->
<div class="a" style="left:106px;top:420px;width:23px;height:400px;background:#d4ef39"></div>
<div class="a" style="left:129px;top:420px;width:73px;height:400px;background:#bcbcbc"></div>
<div class="a" style="left:541px;top:540px;width:348px;height:300px;background:#bcbcbc"></div>
<div class="a" style="left:107px;top:149px;width:1121px;height:421px;overflow:hidden;clip-path:path('M0,0 L1121,0 L1121,418 C1105.0,419.0 1059.7,422.3 1025.0,424.0 C990.3,425.7 950.4,426.9 913.0,428.0 C875.6,429.1 838.0,429.8 800.5,430.4 C763.0,431.0 723.4,431.6 688.0,431.5 C652.6,431.4 621.3,430.8 588.0,430.0 C554.7,429.2 521.3,428.3 488.0,427.0 C454.7,425.7 421.3,424.2 388.0,422.0 C354.7,419.8 317.7,416.2 288.0,413.5 C258.3,410.8 234.1,409.5 210.0,406.0 C185.9,402.5 162.8,397.2 143.6,392.7 C124.4,388.3 109.8,384.1 95.0,379.3 C80.2,374.5 66.9,369.3 54.7,363.8 C42.5,358.2 31.1,352.3 21.8,346.0 C12.5,339.7 2.8,329.3 -1.0,326.0 L-1,0 Z');background:#5a781c">
<div class="a" style="left:-160px;top:-80px;width:390px;height:640px;background:#2e1b06;filter:blur(48px);transform:skewX(5deg);transform-origin:0 80px"></div>
<div class="a" style="left:-60px;top:-60px;width:220px;height:560px;background:#2e1b06;filter:blur(24px)"></div>
<div class="a" style="left:765px;top:-60px;width:700px;height:620px;background:#2f3c1a;filter:blur(40px);transform:skewX(-20deg);transform-origin:0 0"></div>
<div class="a" style="left:600px;top:250px;width:200px;height:300px;background:#3a5a18;filter:blur(28px);opacity:.8"></div>
<div class="a" style="left:330px;top:-30px;width:260px;height:70px;background:#6c8a22;filter:blur(25px);opacity:.6"></div>
</div>
<svg class="a" style="left:0;top:0" width="1600" height="900" viewBox="0 0 1600 900">
<defs>
<linearGradient id="leafg" x1="900" y1="345.6" x2="1148" y2="637.4" gradientUnits="userSpaceOnUse">
<stop offset="0" stop-color="#8cc458"/>
<stop offset="0.03" stop-color="#6aa83a"/>
<stop offset="0.14" stop-color="#5e9c32"/>
<stop offset="0.22" stop-color="#4a8622"/>
<stop offset="0.3" stop-color="#5a9634"/>
<stop offset="0.4" stop-color="#70a43e"/>
<stop offset="0.47" stop-color="#548c28"/>
<stop offset="0.58" stop-color="#70a03c"/>
<stop offset="0.68" stop-color="#4e8424"/>
<stop offset="0.8" stop-color="#609432"/>
<stop offset="1" stop-color="#4e8224"/>
</linearGradient>
<radialGradient id="bigdrop" cx="0.38" cy="0.42" r="0.6">
<stop offset="0" stop-color="#a2c870"/>
<stop offset="0.55" stop-color="#88b45a"/>
<stop offset="0.9" stop-color="#6a9a44"/>
<stop offset="1" stop-color="#b8d890"/>
</radialGradient>
<linearGradient id="refl" x1="880" y1="440" x2="1000" y2="320" gradientUnits="userSpaceOnUse">
<stop offset="0" stop-color="#f4f8ff"/>
<stop offset="0.35" stop-color="#a8b8f0"/>
<stop offset="0.6" stop-color="#e8f0ff"/>
<stop offset="1" stop-color="#90b0d0"/>
</linearGradient>
<radialGradient id="smalldrop" cx="0.5" cy="0.5" r="0.5">
<stop offset="0" stop-color="#3a3322"/>
<stop offset="0.6" stop-color="#4a4430"/>
<stop offset="0.85" stop-color="#6a7050"/>
<stop offset="1" stop-color="#b8d098"/>
</radialGradient>
<filter id="b1"><feGaussianBlur stdDeviation="1"/></filter>
<filter id="b6" x="-50%" y="-50%" width="200%" height="200%"><feGaussianBlur stdDeviation="8"/></filter>

<linearGradient id="pg" x1="107" y1="0" x2="1228" y2="0" gradientUnits="userSpaceOnUse">
<stop offset="0" stop-color="#2a1a0a"/>
<stop offset="0.13" stop-color="#2a1908"/>
<stop offset="0.2" stop-color="#3a3010"/>
<stop offset="0.26" stop-color="#4e6018"/>
<stop offset="0.4" stop-color="#5d7c1e"/>
<stop offset="0.53" stop-color="#577a1c"/>
<stop offset="0.62" stop-color="#3e5c18"/>
<stop offset="0.72" stop-color="#303f18"/>
<stop offset="1" stop-color="#2e3a18"/>
</linearGradient>
<linearGradient id="pv" x1="0" y1="149" x2="0" y2="568" gradientUnits="userSpaceOnUse">
<stop offset="0" stop-color="#000" stop-opacity="0.05"/>
<stop offset="0.5" stop-color="#000" stop-opacity="0"/>
<stop offset="1" stop-color="#000" stop-opacity="0.08"/>
</linearGradient>
<linearGradient id="leaf" x1="900" y1="330" x2="1060" y2="500" gradientUnits="userSpaceOnUse">
<stop offset="0" stop-color="#6aa63e"/>
<stop offset="0.35" stop-color="#4f8e2a"/>
<stop offset="1" stop-color="#3e7a22"/>
</linearGradient>
<radialGradient id="drop1" cx="0.45" cy="0.45" r="0.55">
<stop offset="0" stop-color="#8ab85a"/>
<stop offset="0.8" stop-color="#6fa046"/>
<stop offset="1" stop-color="#b8d890"/>
</radialGradient>
<radialGradient id="drop2" cx="0.5" cy="0.5" r="0.5">
<stop offset="0" stop-color="#4a3a22"/>
<stop offset="0.75" stop-color="#3a3020"/>
<stop offset="0.92" stop-color="#8a8a70"/>
<stop offset="1" stop-color="#c8d0b8"/>
</radialGradient>
<filter id="bigblur" x="-50%" y="-50%" width="200%" height="200%"><feGaussianBlur stdDeviation="28"/></filter>
<filter id="blur2"><feGaussianBlur stdDeviation="2"/></filter>
<filter id="blur4"><feGaussianBlur stdDeviation="3.5"/></filter>
<clipPath id="imgclip"><path d="M107,149 L1228,149 L1228,567 C1212.0,568.0 1166.7,571.3 1132.0,573.0 C1097.3,574.7 1057.4,575.9 1020.0,577.0 C982.6,578.1 945.0,578.8 907.5,579.4 C870.0,580.0 830.4,580.6 795.0,580.5 C759.6,580.4 728.3,579.8 695.0,579.0 C661.7,578.2 628.3,577.3 595.0,576.0 C561.7,574.7 528.3,573.2 495.0,571.0 C461.7,568.8 424.7,565.2 395.0,562.5 C365.3,559.8 341.1,558.5 317.0,555.0 C292.9,551.5 269.8,546.2 250.6,541.7 C231.4,537.2 216.8,533.1 202.0,528.3 C187.2,523.5 173.9,518.3 161.7,512.8 C149.5,507.2 138.1,501.3 128.8,495.0 C119.5,488.7 109.8,478.3 106.0,475.0 L106,149 Z"/></clipPath>
</defs>
<g clip-path="url(#imgclip)">
<rect x="407" y="348" width="302" height="200" fill="#8fb030" fill-opacity="0.22"/>
<polygon points="1131,149 1240,149 1240,580 630,580" fill="url(#leafg)"/>
<line x1="729.5" y1="656.7" x2="819.5" y2="580.2" stroke="#9ad070" stroke-width="1.4" opacity="0.17"/>
<line x1="1255.0" y1="337.4" x2="1305.1" y2="294.7" stroke="#9ad070" stroke-width="1.0" opacity="0.16"/>
<line x1="839.7" y1="448.3" x2="945.8" y2="358.0" stroke="#9ad070" stroke-width="1.5" opacity="0.28"/>
<line x1="738.2" y1="776.9" x2="822.2" y2="705.5" stroke="#9ad070" stroke-width="1.6" opacity="0.16"/>
<line x1="944.0" y1="737.6" x2="987.7" y2="700.4" stroke="#9ad070" stroke-width="1.2" opacity="0.26"/>
<line x1="787.4" y1="783.9" x2="870.1" y2="713.5" stroke="#3a7020" stroke-width="1.0" opacity="0.26"/>
<line x1="610.4" y1="629.5" x2="659.7" y2="587.5" stroke="#2e6a1a" stroke-width="1.4" opacity="0.24"/>
<line x1="1003.7" y1="718.8" x2="1056.9" y2="673.6" stroke="#3a7020" stroke-width="1.3" opacity="0.20"/>
<line x1="1018.6" y1="534.3" x2="1129.1" y2="440.3" stroke="#2e6a1a" stroke-width="0.9" opacity="0.35"/>
<line x1="842.4" y1="459.4" x2="942.1" y2="374.6" stroke="#3a7020" stroke-width="1.5" opacity="0.23"/>
<line x1="839.9" y1="877.1" x2="921.4" y2="807.8" stroke="#b0d880" stroke-width="0.9" opacity="0.22"/>
<line x1="1165.3" y1="371.2" x2="1202.1" y2="340.0" stroke="#9ad070" stroke-width="1.5" opacity="0.24"/>
<line x1="757.2" y1="800.7" x2="851.8" y2="720.3" stroke="#2e6a1a" stroke-width="0.9" opacity="0.23"/>
<line x1="735.1" y1="821.8" x2="807.8" y2="760.0" stroke="#3a7020" stroke-width="1.2" opacity="0.25"/>
<line x1="787.1" y1="555.8" x2="885.1" y2="472.4" stroke="#2e6a1a" stroke-width="1.0" opacity="0.32"/>
<line x1="852.2" y1="432.6" x2="933.0" y2="363.9" stroke="#3a7020" stroke-width="1.4" opacity="0.32"/>
<line x1="879.7" y1="506.7" x2="942.9" y2="452.9" stroke="#2e6a1a" stroke-width="1.6" opacity="0.18"/>
<line x1="743.1" y1="572.5" x2="794.9" y2="528.5" stroke="#2e6a1a" stroke-width="1.4" opacity="0.19"/>
<line x1="716.2" y1="647.5" x2="795.5" y2="580.0" stroke="#b0d880" stroke-width="1.6" opacity="0.29"/>
<line x1="1060.6" y1="469.6" x2="1152.9" y2="391.1" stroke="#9ad070" stroke-width="1.1" opacity="0.32"/>
<line x1="1205.0" y1="561.6" x2="1286.6" y2="492.2" stroke="#2e6a1a" stroke-width="1.0" opacity="0.17"/>
<line x1="750.9" y1="791.4" x2="787.6" y2="760.2" stroke="#3a7020" stroke-width="1.0" opacity="0.17"/>
<line x1="767.2" y1="761.0" x2="849.5" y2="691.0" stroke="#9ad070" stroke-width="1.5" opacity="0.27"/>
<line x1="702.7" y1="554.7" x2="767.6" y2="499.5" stroke="#b0d880" stroke-width="1.6" opacity="0.27"/>
<line x1="744.4" y1="718.1" x2="819.5" y2="654.2" stroke="#2e6a1a" stroke-width="1.1" opacity="0.21"/>
<line x1="1050.9" y1="295.0" x2="1149.0" y2="211.5" stroke="#2e6a1a" stroke-width="1.4" opacity="0.18"/>
<line x1="1144.2" y1="156.0" x2="1223.0" y2="89.0" stroke="#3a7020" stroke-width="1.3" opacity="0.33"/>
<line x1="924.8" y1="704.5" x2="1014.1" y2="628.6" stroke="#9ad070" stroke-width="1.3" opacity="0.20"/>
<line x1="749.8" y1="660.6" x2="850.8" y2="574.7" stroke="#b0d880" stroke-width="1.2" opacity="0.27"/>
<line x1="1212.7" y1="474.6" x2="1261.0" y2="433.5" stroke="#3a7020" stroke-width="1.4" opacity="0.30"/>
<line x1="929.5" y1="438.9" x2="992.5" y2="385.3" stroke="#9ad070" stroke-width="1.6" opacity="0.31"/>
<line x1="791.6" y1="677.0" x2="877.5" y2="604.0" stroke="#b0d880" stroke-width="1.0" opacity="0.34"/>
<line x1="1381.1" y1="429.7" x2="1444.9" y2="375.4" stroke="#3a7020" stroke-width="0.7" opacity="0.24"/>
<line x1="935.1" y1="488.7" x2="1055.7" y2="386.2" stroke="#9ad070" stroke-width="1.1" opacity="0.28"/>
<line x1="804.8" y1="827.0" x2="895.7" y2="749.7" stroke="#2e6a1a" stroke-width="1.4" opacity="0.30"/>
<line x1="783.8" y1="686.5" x2="886.5" y2="599.2" stroke="#b0d880" stroke-width="0.7" opacity="0.34"/>
<line x1="1016.6" y1="608.6" x2="1115.0" y2="524.8" stroke="#9ad070" stroke-width="1.3" opacity="0.18"/>
<line x1="681.9" y1="600.4" x2="795.1" y2="504.1" stroke="#3a7020" stroke-width="1.2" opacity="0.27"/>
<line x1="1245.6" y1="292.0" x2="1290.3" y2="253.9" stroke="#3a7020" stroke-width="0.6" opacity="0.31"/>
<line x1="798.0" y1="796.7" x2="897.0" y2="712.5" stroke="#3a7020" stroke-width="1.0" opacity="0.32"/>
<line x1="888.2" y1="769.1" x2="941.8" y2="723.6" stroke="#b0d880" stroke-width="1.1" opacity="0.30"/>
<line x1="969.9" y1="453.4" x2="1076.7" y2="362.6" stroke="#9ad070" stroke-width="1.5" opacity="0.22"/>
<line x1="1025.8" y1="470.9" x2="1139.0" y2="374.7" stroke="#2e6a1a" stroke-width="1.4" opacity="0.33"/>
<line x1="683.2" y1="601.1" x2="760.3" y2="535.4" stroke="#2e6a1a" stroke-width="1.4" opacity="0.27"/>
<line x1="838.7" y1="786.5" x2="882.2" y2="749.6" stroke="#9ad070" stroke-width="1.2" opacity="0.22"/>
<line x1="1023.4" y1="502.6" x2="1125.6" y2="415.7" stroke="#9ad070" stroke-width="1.5" opacity="0.16"/>
<line x1="631.1" y1="675.2" x2="670.5" y2="641.7" stroke="#2e6a1a" stroke-width="1.2" opacity="0.30"/>
<line x1="1050.8" y1="673.4" x2="1137.3" y2="599.8" stroke="#3a7020" stroke-width="1.3" opacity="0.24"/>
<line x1="979.8" y1="547.0" x2="1096.4" y2="447.9" stroke="#b0d880" stroke-width="1.5" opacity="0.33"/>
<line x1="880.9" y1="468.3" x2="949.5" y2="410.0" stroke="#2e6a1a" stroke-width="1.0" opacity="0.16"/>
<line x1="661.9" y1="673.3" x2="753.6" y2="595.3" stroke="#9ad070" stroke-width="1.5" opacity="0.18"/>
<line x1="1135.3" y1="504.8" x2="1178.9" y2="467.7" stroke="#3a7020" stroke-width="1.6" opacity="0.19"/>
<line x1="1033.1" y1="708.1" x2="1108.1" y2="644.3" stroke="#3a7020" stroke-width="0.8" opacity="0.24"/>
<line x1="890.9" y1="613.9" x2="939.2" y2="572.8" stroke="#b0d880" stroke-width="0.7" opacity="0.22"/>
<line x1="920.6" y1="501.2" x2="1015.4" y2="420.6" stroke="#2e6a1a" stroke-width="0.9" opacity="0.27"/>
<line x1="722.5" y1="755.5" x2="843.1" y2="652.9" stroke="#3a7020" stroke-width="1.6" opacity="0.17"/>
<line x1="647.5" y1="697.8" x2="749.2" y2="611.3" stroke="#b0d880" stroke-width="1.4" opacity="0.31"/>
<line x1="1177.4" y1="534.8" x2="1294.3" y2="435.3" stroke="#2e6a1a" stroke-width="0.7" opacity="0.33"/>
<line x1="1124.5" y1="442.4" x2="1163.1" y2="409.5" stroke="#9ad070" stroke-width="1.4" opacity="0.19"/>
<line x1="940.3" y1="758.8" x2="972.3" y2="731.6" stroke="#9ad070" stroke-width="1.4" opacity="0.17"/>
<line x1="807.5" y1="852.5" x2="916.9" y2="759.5" stroke="#2e6a1a" stroke-width="0.6" opacity="0.35"/>
<line x1="1218.4" y1="287.2" x2="1305.7" y2="213.0" stroke="#9ad070" stroke-width="1.1" opacity="0.20"/>
<line x1="683.9" y1="590.0" x2="718.9" y2="560.2" stroke="#3a7020" stroke-width="1.5" opacity="0.28"/>
<line x1="813.4" y1="687.4" x2="884.6" y2="626.9" stroke="#3a7020" stroke-width="0.9" opacity="0.31"/>
<line x1="823.0" y1="907.4" x2="855.2" y2="880.1" stroke="#3a7020" stroke-width="1.1" opacity="0.20"/>
<line x1="1068.8" y1="428.9" x2="1158.7" y2="352.4" stroke="#2e6a1a" stroke-width="1.1" opacity="0.33"/>
<line x1="982.3" y1="760.1" x2="1032.4" y2="717.5" stroke="#3a7020" stroke-width="0.9" opacity="0.32"/>
<line x1="1118.3" y1="514.7" x2="1185.8" y2="457.3" stroke="#b0d880" stroke-width="1.6" opacity="0.32"/>
<line x1="943.6" y1="322.3" x2="1054.5" y2="227.9" stroke="#2e6a1a" stroke-width="0.8" opacity="0.17"/>
<line x1="1293.9" y1="431.5" x2="1385.7" y2="353.5" stroke="#b0d880" stroke-width="1.2" opacity="0.29"/>
<ellipse cx="975" cy="405" rx="95" ry="28" transform="rotate(-40 975 405)" fill="#1e4a10" opacity="0.45" filter="url(#b6)"/>
<circle cx="722.8" cy="529.0" r="0.8" fill="#e8e060" opacity="0.62"/>
<circle cx="980.2" cy="474.4" r="1.0" fill="#f0b040" opacity="0.61"/>
<circle cx="980.5" cy="574.4" r="0.7" fill="#e8e060" opacity="0.60"/>
<circle cx="1062.6" cy="504.0" r="1.0" fill="#c0c030" opacity="0.82"/>
<circle cx="1076.4" cy="279.3" r="0.5" fill="#c0c030" opacity="0.88"/>
<circle cx="1196.3" cy="539.9" r="0.6" fill="#f0b040" opacity="0.74"/>
<circle cx="1229.4" cy="322.4" r="1.1" fill="#d8d040" opacity="0.76"/>
<circle cx="687.5" cy="552.1" r="1.2" fill="#e8e060" opacity="0.67"/>
<circle cx="927.4" cy="342.1" r="0.8" fill="#c0c030" opacity="0.50"/>
<circle cx="1046.4" cy="477.4" r="0.5" fill="#f0b040" opacity="0.83"/>
<circle cx="1107.5" cy="309.5" r="0.7" fill="#c0c030" opacity="0.79"/>
<circle cx="1225.3" cy="304.5" r="0.8" fill="#d8d040" opacity="0.81"/>
<circle cx="1159.9" cy="509.9" r="0.6" fill="#c0c030" opacity="0.57"/>
<circle cx="1113.2" cy="299.0" r="0.9" fill="#e8e060" opacity="0.56"/>
<circle cx="1011.3" cy="497.2" r="1.0" fill="#d8d040" opacity="0.80"/>
<circle cx="983.9" cy="427.0" r="0.8" fill="#a0c840" opacity="0.85"/>
<circle cx="926.2" cy="371.3" r="1.2" fill="#a0c840" opacity="0.67"/>
<circle cx="1053.4" cy="401.4" r="0.7" fill="#f0b040" opacity="0.55"/>
<circle cx="990.4" cy="457.7" r="0.8" fill="#a0c840" opacity="0.57"/>
<circle cx="1139.9" cy="350.2" r="0.7" fill="#a0c840" opacity="0.64"/>
<circle cx="1192.6" cy="166.1" r="1.1" fill="#d8d040" opacity="0.63"/>
<circle cx="928.1" cy="514.1" r="0.6" fill="#f0b040" opacity="0.92"/>
<circle cx="1145.5" cy="470.8" r="0.7" fill="#c0c030" opacity="0.62"/>
<circle cx="1173.2" cy="491.5" r="0.8" fill="#e8e060" opacity="0.91"/>
<circle cx="1110.9" cy="301.8" r="0.8" fill="#e8e060" opacity="0.61"/>
<circle cx="1123.1" cy="402.5" r="0.6" fill="#d8d040" opacity="0.57"/>
<circle cx="1201.3" cy="201.6" r="0.9" fill="#a0c840" opacity="0.70"/>
<circle cx="1142.0" cy="313.0" r="0.6" fill="#a0c840" opacity="0.59"/>
<circle cx="829.2" cy="460.7" r="0.7" fill="#d8d040" opacity="0.67"/>
<circle cx="1134.5" cy="166.7" r="0.8" fill="#a0c840" opacity="0.74"/>
<circle cx="895.9" cy="543.8" r="0.8" fill="#d8d040" opacity="0.76"/>
<circle cx="1104.3" cy="358.4" r="0.9" fill="#f0b040" opacity="0.89"/>
<circle cx="816.2" cy="533.0" r="0.8" fill="#c0c030" opacity="0.79"/>
<circle cx="893.2" cy="573.0" r="0.6" fill="#d8d040" opacity="0.69"/>
<circle cx="1183.6" cy="150.8" r="1.1" fill="#f0b040" opacity="0.94"/>
<circle cx="954.5" cy="385.3" r="1.2" fill="#d8d040" opacity="0.82"/>
<circle cx="1221.2" cy="399.3" r="0.6" fill="#a0c840" opacity="0.85"/>
<circle cx="675.8" cy="547.5" r="1.1" fill="#f0b040" opacity="0.79"/>
<circle cx="1047.5" cy="353.8" r="0.6" fill="#d8d040" opacity="0.64"/>
<circle cx="1143.7" cy="276.5" r="0.5" fill="#d8d040" opacity="0.64"/>
<circle cx="907.9" cy="360.1" r="0.6" fill="#a0c840" opacity="0.60"/>
<circle cx="926.9" cy="540.7" r="0.5" fill="#a0c840" opacity="0.65"/>
<circle cx="1116.4" cy="377.7" r="0.5" fill="#c0c030" opacity="0.63"/>
<circle cx="1121.1" cy="472.8" r="0.8" fill="#c0c030" opacity="0.91"/>
<circle cx="975.1" cy="319.9" r="0.5" fill="#a0c840" opacity="0.51"/>
<circle cx="995.8" cy="565.9" r="0.6" fill="#d8d040" opacity="0.70"/>
<circle cx="755.1" cy="560.4" r="1.0" fill="#f0b040" opacity="0.51"/>
<circle cx="891.2" cy="546.3" r="0.6" fill="#c0c030" opacity="0.54"/>
<circle cx="874.5" cy="417.4" r="0.9" fill="#d8d040" opacity="0.84"/>
<circle cx="1159.1" cy="321.5" r="1.1" fill="#e8e060" opacity="0.69"/>
<circle cx="899.4" cy="380.8" r="0.9" fill="#e8e060" opacity="0.70"/>
<circle cx="1126.3" cy="321.7" r="0.5" fill="#a0c840" opacity="0.68"/>
<circle cx="1174.8" cy="153.1" r="0.6" fill="#e8e060" opacity="0.53"/>
<circle cx="1064.4" cy="237.7" r="1.1" fill="#e8e060" opacity="0.63"/>
<circle cx="1135.9" cy="508.1" r="0.5" fill="#d8d040" opacity="0.61"/>
<circle cx="921.5" cy="460.6" r="0.6" fill="#a0c840" opacity="0.72"/>
<circle cx="1093.9" cy="339.5" r="0.9" fill="#c0c030" opacity="0.65"/>
<circle cx="896.5" cy="515.3" r="0.6" fill="#f0b040" opacity="0.59"/>
<circle cx="1151.7" cy="385.7" r="0.6" fill="#a0c840" opacity="0.56"/>
<circle cx="983.8" cy="399.7" r="1.0" fill="#d8d040" opacity="0.63"/>
<circle cx="829.4" cy="552.7" r="1.0" fill="#e8e060" opacity="0.59"/>
<circle cx="808.1" cy="555.2" r="0.7" fill="#c0c030" opacity="0.91"/>
<circle cx="809.5" cy="556.1" r="0.7" fill="#f0b040" opacity="0.86"/>
<circle cx="913.0" cy="395.2" r="1.1" fill="#c0c030" opacity="0.91"/>
<circle cx="787.6" cy="471.5" r="0.5" fill="#d8d040" opacity="0.77"/>
<circle cx="929.5" cy="367.8" r="0.8" fill="#c0c030" opacity="0.62"/>
<circle cx="987.8" cy="333.2" r="0.7" fill="#f0b040" opacity="0.52"/>
<circle cx="924.1" cy="535.5" r="0.7" fill="#f0b040" opacity="0.59"/>
<circle cx="1124.7" cy="553.6" r="0.8" fill="#d8d040" opacity="0.86"/>
<circle cx="1125.7" cy="425.1" r="1.0" fill="#a0c840" opacity="0.68"/>
<circle cx="854.7" cy="533.1" r="0.7" fill="#d8d040" opacity="0.75"/>
<circle cx="938.8" cy="497.7" r="1.0" fill="#e8e060" opacity="0.68"/>
<circle cx="698.2" cy="553.1" r="0.6" fill="#a0c840" opacity="0.78"/>
<circle cx="995.8" cy="455.9" r="0.7" fill="#c0c030" opacity="0.57"/>
<circle cx="1150.8" cy="330.4" r="0.7" fill="#c0c030" opacity="0.88"/>
<circle cx="1165.8" cy="151.4" r="0.5" fill="#e8e060" opacity="0.92"/>
<circle cx="1116.6" cy="250.4" r="0.9" fill="#c0c030" opacity="0.78"/>
<circle cx="934.5" cy="422.7" r="0.7" fill="#f0b040" opacity="0.68"/>
<circle cx="957.6" cy="560.3" r="0.6" fill="#d8d040" opacity="0.94"/>
<circle cx="1168.1" cy="456.6" r="0.6" fill="#e8e060" opacity="0.77"/>
<circle cx="1113.7" cy="443.2" r="1.0" fill="#e8e060" opacity="0.64"/>
<circle cx="896.2" cy="481.2" r="0.8" fill="#e8e060" opacity="0.70"/>
<circle cx="981.8" cy="298.1" r="0.8" fill="#a0c840" opacity="0.70"/>
<circle cx="908.0" cy="524.6" r="0.9" fill="#a0c840" opacity="0.80"/>
<circle cx="688.1" cy="556.3" r="1.0" fill="#e8e060" opacity="0.73"/>
<circle cx="919.2" cy="366.4" r="1.0" fill="#a0c840" opacity="0.85"/>
<circle cx="1169.1" cy="427.4" r="0.6" fill="#d8d040" opacity="0.94"/>
<circle cx="828.6" cy="449.0" r="0.6" fill="#e8e060" opacity="0.90"/>
<circle cx="1162.4" cy="267.4" r="0.7" fill="#c0c030" opacity="0.93"/>
<circle cx="1075.4" cy="441.6" r="0.9" fill="#f0b040" opacity="0.64"/>
<circle cx="718.8" cy="528.3" r="0.9" fill="#c0c030" opacity="0.63"/>
<circle cx="907.6" cy="509.9" r="0.6" fill="#e8e060" opacity="0.74"/>
<circle cx="1147.8" cy="571.9" r="1.0" fill="#f0b040" opacity="0.90"/>
<circle cx="986.2" cy="406.0" r="1.0" fill="#a0c840" opacity="0.67"/>
<circle cx="914.4" cy="527.5" r="0.8" fill="#c0c030" opacity="0.84"/>
<circle cx="1144.7" cy="434.3" r="1.0" fill="#e8e060" opacity="0.84"/>
<circle cx="829.7" cy="524.3" r="0.8" fill="#a0c840" opacity="0.66"/>
<circle cx="908.1" cy="372.7" r="1.0" fill="#f0b040" opacity="0.51"/>
<circle cx="815.9" cy="429.0" r="0.9" fill="#d8d040" opacity="0.74"/>
<circle cx="882.1" cy="573.3" r="0.6" fill="#c0c030" opacity="0.78"/>
<circle cx="1097.1" cy="503.6" r="0.9" fill="#e8e060" opacity="0.76"/>
<circle cx="1059.5" cy="514.6" r="0.7" fill="#a0c840" opacity="0.91"/>
<circle cx="933.5" cy="349.2" r="0.6" fill="#a0c840" opacity="0.57"/>
<circle cx="1146.9" cy="445.5" r="0.6" fill="#c0c030" opacity="0.59"/>
<circle cx="1054.5" cy="521.9" r="1.1" fill="#a0c840" opacity="0.58"/>
<circle cx="856.5" cy="544.3" r="1.2" fill="#d8d040" opacity="0.83"/>
<circle cx="1042.3" cy="468.7" r="1.1" fill="#a0c840" opacity="0.84"/>
<circle cx="1163.2" cy="359.7" r="0.6" fill="#a0c840" opacity="0.95"/>
<circle cx="1054.5" cy="352.5" r="0.7" fill="#d8d040" opacity="0.84"/>
<circle cx="998.2" cy="543.2" r="1.2" fill="#f0b040" opacity="0.63"/>
<circle cx="928.8" cy="373.5" r="0.7" fill="#c0c030" opacity="0.61"/>
<circle cx="1209.8" cy="209.6" r="0.8" fill="#f0b040" opacity="0.88"/>
<circle cx="1146.0" cy="360.6" r="1.1" fill="#f0b040" opacity="0.86"/>
<circle cx="1050.1" cy="419.9" r="1.1" fill="#f0b040" opacity="0.57"/>
<circle cx="670.4" cy="564.6" r="0.7" fill="#c0c030" opacity="0.56"/>
<circle cx="1152.3" cy="480.0" r="1.0" fill="#d8d040" opacity="0.53"/>
<circle cx="1124.0" cy="182.6" r="1.1" fill="#d8d040" opacity="0.78"/>
<circle cx="1084.2" cy="247.4" r="0.7" fill="#c0c030" opacity="0.65"/>
<circle cx="875.7" cy="504.4" r="0.5" fill="#e8e060" opacity="0.84"/>
<circle cx="1034.2" cy="536.1" r="0.9" fill="#e8e060" opacity="0.51"/>
<circle cx="964.5" cy="503.1" r="0.7" fill="#d8d040" opacity="0.82"/>
<circle cx="722.4" cy="507.9" r="0.5" fill="#d8d040" opacity="0.72"/>
<circle cx="1203.1" cy="338.6" r="1.2" fill="#c0c030" opacity="0.77"/>
<circle cx="932.9" cy="476.3" r="0.9" fill="#f0b040" opacity="0.67"/>
<circle cx="1034.0" cy="467.4" r="1.0" fill="#f0b040" opacity="0.66"/>
<ellipse cx="821" cy="390" rx="42" ry="41" fill="url(#smalldrop)"/>
<path d="M795,372 C810,360 835,362 848,378" stroke="#2a2418" stroke-width="6" fill="none" opacity="0.6" filter="url(#b1)"/>
<path d="M790,405 C800,420 830,428 850,415" stroke="#8a7a58" stroke-width="5" fill="none" opacity="0.6" filter="url(#b1)"/>
<path d="M822,360 L826,410" stroke="#7ab050" stroke-width="1" opacity="0.9"/>
<path d="M840,408 C852,400 860,392 862,378" stroke="#d8e8f8" stroke-width="3" fill="none" opacity="0.8" filter="url(#b1)"/>
<circle cx="798" cy="390" r="2.5" fill="#fff"/>
<path d="M857.8,350 C857,305 895,268 943,270 C975,271 1005,285 1032,302 L1032,357 C1010,385 960,412 890,428 C868,418 858,385 857.8,350 Z" fill="url(#bigdrop)" fill-opacity="0.85" stroke="#b8e090" stroke-width="1.2" stroke-opacity="0.7"/>
<path d="M915,278 C945,290 960,320 955,350" stroke="#5a8a38" stroke-width="4" fill="none" opacity="0.3" filter="url(#b1)"/>
<path d="M868,405 C895,385 935,350 965,325 C985,310 1005,300 1032,296 L1032,357 C1010,385 960,412 890,428 C880,422 872,414 868,405 Z" fill="url(#refl)" opacity="0.9"/>
<path d="M900,410 Q955.0,371.5 1010,345" stroke="#2a3a70" stroke-width="2.5" fill="none" opacity="0.75" filter="url(#b1)"/>
<path d="M930,412 Q977.5,377.5 1025,355" stroke="#203060" stroke-width="1.8" fill="none" opacity="0.75" filter="url(#b1)"/>
<path d="M890,420 Q920.0,401.5 950,395" stroke="#6070c0" stroke-width="2" fill="none" opacity="0.75" filter="url(#b1)"/>
<path d="M960,380 Q995.0,351.5 1030,335" stroke="#3a4a90" stroke-width="1.5" fill="none" opacity="0.75" filter="url(#b1)"/>
<path d="M875,414 Q895.0,401.0 915,400" stroke="#ffffff" stroke-width="3" fill="none" opacity="0.75" filter="url(#b1)"/>
<path d="M940,350 Q970.0,328.0 1000,318" stroke="#ffffff" stroke-width="3" fill="none" opacity="0.75" filter="url(#b1)"/>
<path d="M955,365 Q990.0,337.5 1025,322" stroke="#e8f0ff" stroke-width="2" fill="none" opacity="0.75" filter="url(#b1)"/>
<path d="M985,345 Q1007.5,325.5 1030,318" stroke="#4a5aa0" stroke-width="1.5" fill="none" opacity="0.75" filter="url(#b1)"/>
<circle cx="893" cy="346.7" r="3.5" fill="#fffbe8"/>
<ellipse cx="1140" cy="442" rx="14" ry="11" transform="rotate(-40 1140 442)" fill="#3e7a28" opacity="0.5"/>
<circle cx="1122" cy="444" r="2" fill="#fff" opacity="0.9"/>
<ellipse cx="1150" cy="448" rx="3" ry="6" fill="#e8f0ff" opacity="0.9"/>
<circle cx="961" cy="496" r="2.5" fill="#e0d8e8" opacity="0.8"/>
</g>
<!-- banner -->
<rect x="107" y="309.5" width="300" height="39" fill="#c4c6c2" fill-opacity="0.43"/>
<rect x="407" y="309.5" width="302" height="39" fill="#dfe4d3"/>
<line x1="107" y1="317.5" x2="706" y2="317.5" stroke="#555" stroke-width="1"/>
<line x1="365" y1="289.5" x2="468" y2="289.5" stroke="#222" stroke-width="1"/>
<!-- waves -->
<g filter="url(#blur4)"><path d="M106,475 C109.8,478.3 119.5,488.7 128.8,495.0 C138.1,501.3 149.5,507.2 161.7,512.8 C173.9,518.3 187.2,523.5 202.0,528.3 C216.8,533.1 231.4,537.2 250.6,541.7 C269.8,546.2 292.9,551.5 317.0,555.0 C341.1,558.5 365.3,559.8 395.0,562.5 C424.7,565.2 461.7,568.8 495.0,571.0 C528.3,573.2 561.7,574.7 595.0,576.0 C628.3,577.3 661.7,578.2 695.0,579.0 C728.3,579.8 759.6,580.4 795.0,580.5 C830.4,580.6 870.0,580.0 907.5,579.4 C945.0,578.8 982.6,578.1 1020.0,577.0 C1057.4,575.9 1097.3,574.7 1132.0,573.0 C1166.7,571.3 1212.0,568.0 1228.0,567.0 L1228,571 C1212.0,572.0 1166.7,575.3 1132.0,577.0 C1097.3,578.7 1057.4,579.9 1020.0,581.0 C982.6,582.1 945.0,582.8 907.5,583.4 C870.0,584.0 830.4,584.6 795.0,584.5 C759.6,584.4 728.3,583.8 695.0,583.0 C661.7,582.2 628.3,581.3 595.0,580.0 C561.7,578.7 528.3,577.2 495.0,575.0 C461.7,572.8 424.7,569.2 395.0,566.5 C365.3,563.8 341.1,562.5 317.0,559.0 C292.9,555.5 269.8,550.2 250.6,545.7 C231.4,541.2 216.8,537.1 202.0,532.3 C187.2,527.5 173.9,522.3 161.7,516.8 C149.5,511.2 138.1,505.3 128.8,499.0 C119.5,492.7 109.8,482.3 106.0,479.0 Z" fill="#000" fill-opacity="0.35"/></g>
<path d="M96,378 C101.7,379.8 117.6,385.2 130.0,389.0 C142.4,392.8 150.5,394.8 170.6,401.0 C190.7,407.2 226.2,419.2 250.6,426.0 C275.0,432.8 292.9,436.0 317.0,441.7 C341.1,447.4 365.3,454.0 395.0,460.0 C424.7,466.0 461.7,472.1 495.0,477.5 C528.3,482.9 559.6,487.2 595.0,492.5 C630.4,497.8 674.2,504.2 707.5,509.0 C740.8,513.8 761.7,516.7 795.0,521.0 C828.3,525.3 870.0,530.6 907.5,535.0 C945.0,539.4 982.5,543.9 1020.0,547.6 C1057.5,551.4 1097.8,554.7 1132.5,557.5 C1167.2,560.3 1212.1,563.3 1228.0,564.5 L1228,567 C1212.0,568.0 1166.7,571.3 1132.0,573.0 C1097.3,574.7 1057.4,575.9 1020.0,577.0 C982.6,578.1 945.0,578.8 907.5,579.4 C870.0,580.0 830.4,580.6 795.0,580.5 C759.6,580.4 728.3,579.8 695.0,579.0 C661.7,578.2 628.3,577.3 595.0,576.0 C561.7,574.7 528.3,573.2 495.0,571.0 C461.7,568.8 424.7,565.2 395.0,562.5 C365.3,559.8 341.1,558.5 317.0,555.0 C292.9,551.5 269.8,546.2 250.6,541.7 C231.4,537.2 216.8,533.1 202.0,528.3 C187.2,523.5 173.9,518.3 161.7,512.8 C149.5,507.2 138.1,501.3 128.8,495.0 C119.5,488.7 109.8,478.3 106.0,475.0 L104,460 L100,440 L96,420 Z" fill="#adc639"/>
<path d="M96,401.7 C97.7,402.4 98.8,402.7 106.0,406.0 C113.2,409.3 126.4,416.1 139.4,421.7 C152.4,427.3 165.5,433.5 184.0,439.4 C202.5,445.3 228.4,452.0 250.6,457.2 C272.8,462.4 292.9,466.1 317.0,470.6 C341.1,475.2 365.3,479.4 395.0,484.5 C424.7,489.6 461.7,495.9 495.0,501.0 C528.3,506.1 561.7,510.8 595.0,515.0 C628.3,519.2 661.7,522.7 695.0,526.0 C728.3,529.3 759.6,531.8 795.0,535.0 C830.4,538.2 870.0,542.0 907.5,545.0 C945.0,548.0 982.6,550.5 1020.0,553.0 C1057.4,555.5 1097.3,558.0 1132.0,560.0 C1166.7,562.0 1212.0,564.2 1228.0,565.0 L1228,567 C1212.0,568.0 1166.7,571.3 1132.0,573.0 C1097.3,574.7 1057.4,575.9 1020.0,577.0 C982.6,578.1 945.0,578.8 907.5,579.4 C870.0,580.0 830.4,580.6 795.0,580.5 C759.6,580.4 728.3,579.8 695.0,579.0 C661.7,578.2 628.3,577.3 595.0,576.0 C561.7,574.7 528.3,573.2 495.0,571.0 C461.7,568.8 424.7,565.2 395.0,562.5 C365.3,559.8 341.1,558.5 317.0,555.0 C292.9,551.5 269.8,546.2 250.6,541.7 C231.4,537.2 216.8,533.1 202.0,528.3 C187.2,523.5 173.9,518.3 161.7,512.8 C149.5,507.2 138.1,501.3 128.8,495.0 C119.5,488.7 109.8,478.3 106.0,475.0 L104,460 L100,440 L96,420 Z" fill="#c2dc4f"/>
<path d="M97.2,426 C98.7,427.1 99.0,428.7 106.0,432.8 C113.0,436.9 126.4,444.7 139.4,450.6 C152.4,456.5 165.5,461.8 184.0,468.0 C202.5,474.2 228.4,482.4 250.6,488.0 C272.8,493.6 292.9,496.6 317.0,501.7 C341.1,506.8 365.3,513.4 395.0,518.5 C424.7,523.6 461.7,528.5 495.0,532.5 C528.3,536.5 561.7,539.6 595.0,542.5 C628.3,545.4 661.7,547.9 695.0,550.0 C728.3,552.1 759.6,553.5 795.0,555.0 C830.4,556.5 870.0,557.9 907.5,559.0 C945.0,560.1 982.6,560.9 1020.0,561.7 C1057.4,562.5 1097.3,563.0 1132.0,563.7 C1166.7,564.4 1212.0,565.6 1228.0,566.0 L1228,567 C1212.0,568.0 1166.7,571.3 1132.0,573.0 C1097.3,574.7 1057.4,575.9 1020.0,577.0 C982.6,578.1 945.0,578.8 907.5,579.4 C870.0,580.0 830.4,580.6 795.0,580.5 C759.6,580.4 728.3,579.8 695.0,579.0 C661.7,578.2 628.3,577.3 595.0,576.0 C561.7,574.7 528.3,573.2 495.0,571.0 C461.7,568.8 424.7,565.2 395.0,562.5 C365.3,559.8 341.1,558.5 317.0,555.0 C292.9,551.5 269.8,546.2 250.6,541.7 C231.4,537.2 216.8,533.1 202.0,528.3 C187.2,523.5 173.9,518.3 161.7,512.8 C149.5,507.2 138.1,501.3 128.8,495.0 C119.5,488.7 109.8,478.3 106.0,475.0 L104,460 L100,440 Z" fill="#d4ef39"/>
<!-- selection frame -->
<rect x="105.5" y="149.5" width="1123" height="421" fill="none" stroke="#f00" stroke-width="1"/>
<rect x="105" y="566" width="5" height="5" fill="#f00"/>
<line x1="105.5" y1="570" x2="105.5" y2="800" stroke="#f00" stroke-width="1"/>
<rect x="663" y="566" width="5" height="5" fill="#f00"/>
<rect x="1224" y="566" width="5" height="5" fill="#f00"/>
<rect x="663" y="149" width="5" height="5" fill="#f00"/>
<rect x="106" y="149" width="1122" height="2" fill="#f00"/>
<!-- text frames -->
<line x1="202" y1="632.5" x2="1228" y2="632.5" stroke="#333" stroke-width="1"/>
<line x1="224.5" y1="599.5" x2="401" y2="599.5" stroke="#444" stroke-width="1"/>
<line x1="567.5" y1="599.5" x2="743" y2="599.5" stroke="#444" stroke-width="1"/>
<line x1="909.5" y1="599.5" x2="1085" y2="599.5" stroke="#444" stroke-width="1"/>
<g stroke="#808080" stroke-width="1">
<line x1="224.5" y1="606" x2="224.5" y2="800"/><line x1="521.5" y1="606" x2="521.5" y2="800"/>
<line x1="567.5" y1="606" x2="567.5" y2="800"/><line x1="863.5" y1="606" x2="863.5" y2="800"/>
<line x1="909.5" y1="606" x2="909.5" y2="800"/><line x1="1205.5" y1="606" x2="1205.5" y2="800"/>
</g>
</svg>
<div class="a" style="left:213px;top:306px;font-size:32px;color:#fff;transform:scaleX(0.885);transform-origin:0 0;line-height:46px;white-space:nowrap">NSULTING</div>
<div class="a" style="left:489px;top:306px;font-size:32px;color:#6b6b6b;transform:scaleX(0.926);transform-origin:0 0;line-height:46px;white-space:nowrap">TRAINING</div>
<div class="a" style="left:388px;top:269px;font-size:84px;color:#a9c83a;line-height:100px;white-space:nowrap">&amp;</div>
<div class="a" style="left:945px;top:514px;font-size:13.5px;color:#f2f2f2;white-space:nowrap;line-height:20px">Dew on grass by Luc Viatour / www.Lucnix.be</div>
<div class="a" style="left:224px;top:594px;font-size:23.8px;color:#a9c63a;transform:scaleX(0.938);transform-origin:0 0;line-height:30px;white-space:nowrap">CONSULTING</div>
<div class="a" style="left:567px;top:594px;font-size:23.8px;color:#fff;transform:scaleX(0.92);transform-origin:0 0;line-height:30px;white-space:nowrap">TRAINING</div>
<div class="a" style="left:909px;top:594px;font-size:23.8px;color:#a9c63a;transform:scaleX(0.87);transform-origin:0 0;line-height:30px;white-space:nowrap">RESULTS</div>
<div class="coltxt" style="left:225px;top:628px;width:297px"><div>Munich at 8:35 P.M., on 1st May, arriving at</div><div>Vienna early next morning; should have arrived at</div><div>6:46, but train was an hour late. Buda-Pesth</div><div>seems a wonderful place, from the glimpse which</div><div>I got of it from the train and the little I could walk</div><div>through the streets. I feared to go very far from</div><div>the station, as we had arrived late and would start</div><div style="text-align:left;text-align-last:left">as near the correct time as possible.</div></div>
<div class="coltxt" style="left:567px;top:628px;width:297px"><div>to drink up all the water in my carafe, and was still</div><div>thirsty. Towards morning I slept and was wakened</div><div>by the continuous knocking at my door, so I guess</div><div style="text-align:left;text-align-last:left">I must have been sleeping soundly then.</div><div></div><div>The impression I had was that we were leaving</div><div>the West and entering the East; the most western</div><div>of splendid bridges over the Danube, which is</div><div>here of noble width and depth, took us among the</div></div>
<div class="coltxt" style="left:909px;top:628px;width:297px"><div>porridge of maize flour which they said was</div><div>&quot;mamaliga&quot;, and egg-plant stuffed with forcemeat,</div><div>a very excellent dish, which they call &quot;impletata&quot;.</div><div style="text-align:left;text-align-last:left">(Mem., get recipe for this also.)</div><div>I had for breakfast more paprika, and a sort of</div><div>porridge of maize flour which they said was</div><div style="text-align:left;text-align-last:left">&quot;mamaliga&quot;,</div><div>and egg-plant stuffed with forcemeat, a very</div><div>excellent dish, which they call &quot;impletata&quot;. (Mem.</div></div>

</div></div>


<div class="a" style="left:0px;top:797px;width:1600px;height:14px;background:#393939;border-radius:0px;"></div>
<div class="a" style="left:0px;top:797px;width:1350px;height:1px;background:#2c2c2c;border-radius:0px;"></div>
<div class="a" style="left:183px;top:800px;width:1117px;height:7px;background:#707070;border-radius:3px;"></div>
<div class="a" style="left:0px;top:810px;width:1600px;height:1px;background:#474747;border-radius:0px;"></div>
<div class="a" style="left:0px;top:811px;width:1600px;height:62px;background:#383838;border-radius:0px;"></div>
<div class="a" style="left:4px;top:816px;width:41px;height:22px;background:#3c3c3c;border:1px solid #2c2c2c;border-radius:3px;"></div>
<div class="a" style="left:10px;top:818px;line-height:18px;font-size:11.5px;color:#d0d0d0;white-space:nowrap;transform:scaleX(0.83);transform-origin:0 50%">mm</div>
<div class="a" style="left:26px;top:821px;width:1px;height:12px;background:#2a2a2a;border-radius:0px;"></div>
<svg class="a" style="left:29.5px;top:824.0px" width="11" height="7"><path d="M1,1 L5.5,6 L10,1" stroke="#9a9a9a" stroke-width="1.2" fill="none"/></svg>
<div class="a" style="left:49px;top:816px;width:56px;height:22px;background:#3c3c3c;border:1px solid #2c2c2c;border-radius:3px;"></div>
<div class="a" style="left:55px;top:818px;line-height:18px;font-size:11.5px;color:#d0d0d0;white-space:nowrap;transform:scaleX(0.83);transform-origin:0 50%">Normal</div>
<div class="a" style="left:86px;top:821px;width:1px;height:12px;background:#2a2a2a;border-radius:0px;"></div>
<svg class="a" style="left:89.5px;top:824.0px" width="11" height="7"><path d="M1,1 L5.5,6 L10,1" stroke="#9a9a9a" stroke-width="1.2" fill="none"/></svg>
<div class="a" style="left:108px;top:815px;width:75px;height:25px;background:#343434;border:1px solid #2c2c2c;border-radius:3px;"></div>
<div class="a" style="left:165px;top:815px;width:18px;height:25px;background:#383838;border:1px solid #2c2c2c;border-radius:3px;"></div>
<div class="a" style="left:115px;top:818px;line-height:18px;font-size:11px;color:#d0d0d0;white-space:nowrap;transform:scaleX(0.83);transform-origin:0 50%">100.00 %</div>
<svg class="a" style="left:169px;top:818px" width="10" height="6"><path d="M1,5 L5,1 L9,5" stroke="#9a9a9a" stroke-width="1.1" fill="none"/></svg>
<svg class="a" style="left:169.0px;top:830.5px" width="10" height="7"><path d="M1,1 L5.0,6 L9,1" stroke="#9a9a9a" stroke-width="1.2" fill="none"/></svg>
<svg class="a" style="left:185px;top:818px" width="20" height="17"><circle cx="7" cy="7" r="5.5" fill="#4a80d0" stroke="#c8c8c8" stroke-width="1.3"/><rect x="4" y="6" width="6" height="2" fill="#fff"/><path d="M11,11 L15,15" stroke="#999" stroke-width="1.6" stroke-dasharray="1.5,.7"/></svg>
<svg class="a" style="left:202.0px;top:824.5px" width="8" height="7"><path d="M1,1 L4.0,6 L7,1" stroke="#9a9a9a" stroke-width="1.2" fill="none"/></svg>
<svg class="a" style="left:217px;top:818px" width="20" height="17"><circle cx="7" cy="7" r="5.5" fill="#4a80d0" stroke="#c8c8c8" stroke-width="1.3"/><rect x="6" y="4" width="2" height="6" fill="#fff"/><path d="M11,11 L15,15" stroke="#999" stroke-width="1.6" stroke-dasharray="1.5,.7"/></svg>
<svg class="a" style="left:239px;top:818px" width="20" height="17"><circle cx="7" cy="7" r="5.5" fill="#4a80d0" stroke="#c8c8c8" stroke-width="1.3"/><rect x="4" y="6" width="6" height="2" fill="#fff"/><rect x="6" y="4" width="2" height="6" fill="#fff"/><path d="M11,11 L15,15" stroke="#999" stroke-width="1.6" stroke-dasharray="1.5,.7"/></svg>
<svg class="a" style="left:256.0px;top:824.5px" width="8" height="7"><path d="M1,1 L4.0,6 L7,1" stroke="#9a9a9a" stroke-width="1.2" fill="none"/></svg>
<svg class="a" style="left:272px;top:818px" width="17" height="16"><rect x="0" y="1" width="1.5" height="14" fill="#8c8c8c"/><path d="M3,8 L9,1 L9,5 L15,5 L15,11 L9,11 L9,15 Z" fill="#8c8c8c" stroke="#6a6a6a" stroke-width=".6"/></svg>
<svg class="a" style="left:297px;top:818px" width="17" height="16"><path d="M2,8 L9,1 L9,5 L15,5 L15,11 L9,11 L9,15 Z" fill="#8c8c8c" stroke="#6a6a6a" stroke-width=".6"/></svg>
<svg class="a" style="left:423px;top:818px" width="17" height="16"><path d="M15,8 L8,1 L8,5 L2,5 L2,11 L8,11 L8,15 Z" fill="#8c8c8c" stroke="#6a6a6a" stroke-width=".6"/></svg>
<svg class="a" style="left:448px;top:818px" width="17" height="16"><rect x="15.5" y="1" width="1.5" height="14" fill="#8c8c8c"/><path d="M14,8 L8,1 L8,5 L2,5 L2,11 L8,11 L8,15 Z" fill="#8c8c8c" stroke="#6a6a6a" stroke-width=".6"/></svg>
<div class="a" style="left:319px;top:816px;width:77px;height:21px;background:#333333;border:1px solid #2c2c2c;border-radius:3px;"></div>
<div class="a" style="left:366px;top:817px;width:29px;height:19px;background:#3c3c3c;border-radius:0px;"></div>
<div class="a" style="left:338px;top:819px;height:18px;line-height:18px;font-size:11px;color:#d0d0d0;font-weight:400;white-space:nowrap;">1</div>
<svg class="a" style="left:375.5px;top:823.5px" width="11" height="7"><path d="M1,1 L5.5,6 L10,1" stroke="#9a9a9a" stroke-width="1.2" fill="none"/></svg>
<div class="a" style="left:401px;top:818px;line-height:18px;font-size:11px;color:#d0d0d0;white-space:nowrap;transform:scaleX(0.85);transform-origin:0 50%">of 1</div>
<div class="a" style="left:470px;top:816px;width:126px;height:22px;background:#3a3a3a;border:1px solid #2c2c2c;border-radius:3px;"></div>
<div class="a" style="left:474px;top:821px;width:16px;height:12px;background:#ff0000;border-radius:0px;"></div>
<div class="a" style="left:493px;top:818px;line-height:18px;font-size:11px;color:#d6d6d6;white-space:nowrap;transform:scaleX(0.81);transform-origin:0 50%">IMAGE AND LOGO</div>
<div class="a" style="left:578px;top:820px;width:1px;height:14px;background:#2a2a2a;border-radius:0px;"></div>
<svg class="a" style="left:580.5px;top:823.5px" width="11" height="7"><path d="M1,1 L5.5,6 L10,1" stroke="#9a9a9a" stroke-width="1.2" fill="none"/></svg>
<svg class="a" style="left:1424px;top:818px" width="22" height="17"><rect x="1" y="1" width="15" height="11" fill="#d8d8d8" stroke="#999" stroke-width=".6"/><rect x="3" y="3" width="5" height="4" fill="#888"/><rect x="8" y="3" width="6" height="4" fill="#aaa"/><rect x="3" y="7" width="5" height="4" fill="#aaa"/><rect x="6" y="12" width="5" height="3" fill="#ccc"/><path d="M17,12 L19,14 L21,9" stroke="#888" fill="none"/></svg>
<svg class="a" style="left:1455px;top:819px" width="18" height="15"><path d="M1,8 C5,2 13,2 17,8 C13,13 5,13 1,8 Z" fill="#e8e8e8"/><circle cx="9" cy="8" r="3.2" fill="#444"/><path d="M3,4 C6,0 12,0 16,4" stroke="#ddd" fill="none" stroke-width="1.2"/></svg>
<div class="a" style="left:1478px;top:816px;width:119px;height:22px;background:#383838;border:1px solid #2e2e2e;border-radius:3px;"></div>
<div class="a" style="left:1481px;top:818px;line-height:18px;font-size:11px;color:#7a7a7a;white-space:nowrap;transform:scaleX(0.87);transform-origin:0 50%">Normal Vision</div>
<div class="a" style="left:1579px;top:820px;width:1px;height:14px;background:#2a2a2a;border-radius:0px;"></div>
<svg class="a" style="left:1581.5px;top:823.5px" width="11" height="7"><path d="M1,1 L5.5,6 L10,1" stroke="#6a6a6a" stroke-width="1.2" fill="none"/></svg>
<div class="a" style="left:1055px;top:847px;width:98px;height:21px;background:#2e2e2e;border-radius:4px;"></div>
<div class="a" style="left:1055px;top:847px;width:4px;height:21px;background:#8ba66a;border-radius:2px;"></div>
<div class="a" style="left:1160px;top:849px;height:18px;line-height:18px;font-size:12.4px;color:#d8d8d8;font-weight:400;white-space:nowrap;">X-Pos:</div>
<div class="a" style="left:1202px;top:849px;height:18px;line-height:18px;font-size:12.4px;color:#d8d8d8;font-weight:400;white-space:nowrap;">171.714 mm</div>
<div class="a" style="left:1383px;top:849px;height:18px;line-height:18px;font-size:12.4px;color:#d8d8d8;font-weight:400;white-space:nowrap;">Y-Pos:</div>
<div class="a" style="left:1424px;top:849px;height:18px;line-height:18px;font-size:12.4px;color:#d8d8d8;font-weight:400;white-space:nowrap;">-9.829 mm</div>
<div class="a" style="left:0px;top:873px;width:1600px;height:27px;background:#2c2c2c;border-radius:0px;"></div>
<div class="a" style="left:0px;top:873px;width:1600px;height:1px;background:#1e1e1e;border-radius:0px;"></div>
<svg class="a" style="left:3px;top:876px" width="22" height="20"><path d="M1,2 H6 V13 C6,16 8,17 11,17 H18 C20,17 21,16 21,14 V6 C21,3 19,2 16,2 H10 C8,2 7,3 7,5" fill="#87cf3e" stroke="#fff" stroke-width="1.2"/><path d="M9,14 V7 C9,5 13,5 13,7 V14 M13,8 C13,5 17,5 17,8 V14" stroke="#fff" stroke-width="1.3" fill="none"/></svg>
<div class="a" style="left:31px;top:877px;height:18px;line-height:18px;font-size:14px;color:#d0d0d0;font-weight:700;white-space:nowrap;">Menu</div>
<svg class="a" style="left:79px;top:875px" width="22" height="20"><rect x="1" y="1" width="20" height="2" fill="#ddd"/><rect x="1" y="3" width="20" height="15" fill="#76a84a"/><rect x="5" y="13" width="12" height="4" fill="#3a5a28"/></svg>
<svg class="a" style="left:119px;top:875px" width="20" height="20"><rect x="0" y="0" width="20" height="20" rx="4" fill="#f08a3a"/><circle cx="10" cy="10" r="6" fill="#fff"/><circle cx="11" cy="10" r="3.5" fill="#f08a3a"/></svg>
<svg class="a" style="left:141px;top:875px" width="19" height="20"><rect x="0" y="0" width="19" height="20" rx="3" fill="#1a1a1a"/><text x="2" y="9" font-size="8" fill="#ddd" font-family="Liberation Sans">$_</text></svg>
<svg class="a" style="left:163px;top:876px" width="20" height="18"><path d="M0,2 H7 L9,4 H20 V18 H0 Z" fill="#8cc04e"/><rect x="0" y="5" width="20" height="13" fill="#78b040"/></svg>
<svg class="a" style="left:196px;top:876px" width="17" height="19"><rect x="0" y="0" width="17" height="19" rx="3" fill="#4a78c0"/><path d="M8.5,3 L13,9 L8.5,16 L4,9 Z" fill="#e8e8e8"/><circle cx="8.5" cy="9" r="1.5" fill="#4a78c0"/></svg>
<div class="a" style="left:216px;top:878px;height:18px;line-height:18px;font-size:14.5px;color:#e8e8e8;font-weight:700;white-space:nowrap;">Scribus 1.4.6 - [...</div>
<div class="a" style="left:196px;top:897px;width:162px;height:3px;background:#8fb36f;border-radius:0px;"></div>
<svg class="a" style="left:1461px;top:877px" width="20" height="17"><path d="M1,6 C6,1 14,1 19,6" stroke="#e0e0e0" stroke-width="1.8" fill="none"/><path d="M4,9 C8,5 12,5 16,9" stroke="#e0e0e0" stroke-width="1.8" fill="none"/><path d="M7,12 C9,10 11,10 13,12" stroke="#e0e0e0" stroke-width="1.8" fill="none"/><circle cx="10" cy="15" r="1.5" fill="#e0e0e0"/></svg>
<svg class="a" style="left:1486px;top:877px" width="18" height="17"><path d="M1,6 H5 L10,1 V16 L5,11 H1 Z" fill="#d0d0d0"/><path d="M12,5 C14,7 14,10 12,12 M14,3 C17,6 17,11 14,14" stroke="#d0d0d0" stroke-width="1.4" fill="none"/></svg>
<svg class="a" style="left:1513px;top:876px" width="14" height="20"><rect x="4" y="0.5" width="6" height="2.5" fill="#ccc"/><rect x="1" y="3" width="12" height="16" rx="2" fill="none" stroke="#ccc" stroke-width="1.6"/><rect x="3" y="9" width="8" height="8" fill="#999"/></svg>
<div class="a" style="left:1536px;top:877px;height:18px;line-height:18px;font-size:14px;color:#d8d8d8;font-weight:700;white-space:nowrap;">21:43</div>
<svg class="a" style="left:1579px;top:877px" width="20" height="18"><rect x="1" y="1" width="13" height="11" fill="none" stroke="#ccc" stroke-width="1.6"/><path d="M16,5 H19 V16 H6 V13" stroke="#ccc" stroke-width="1.6" fill="none"/></svg>
<div class="a" style="left:29px;top:125px;width:183px;height:276px;background:#3a3a3a;border-radius:0px;box-shadow:0 1px 4px rgba(0,0,0,.45)"></div>
<div class="a" style="left:29px;top:125px;width:183px;height:24px;background:#2f2f2f;border-radius:0px;"></div>
<div class="a" style="left:61px;top:130px;height:18px;line-height:18px;font-size:11.6px;color:#e4e4e4;font-weight:700;white-space:nowrap;">Align and Distribute</div>
<svg class="a" style="left:189px;top:130px" width="14" height="14"><circle cx="7" cy="7" r="7" fill="#5f5f5f"/><path d="M4,4 L10,10 M10,4 L4,10" stroke="#2b2b2b" stroke-width="1.6"/></svg>
<div class="a" style="left:35px;top:184px;width:171px;height:211px;background:#3c3c3c;border:1px solid #2d2d2d;border-radius:0px;"></div>
<div class="a" style="left:35px;top:155px;width:45px;height:30px;background:#3f3f3f;border:1px solid #2d2d2d;border-radius:0px;border-bottom:none"></div>
<div class="a" style="left:43px;top:162px;height:18px;line-height:18px;font-size:12.8px;color:#dadada;font-weight:400;white-space:nowrap;">Align</div>
<div class="a" style="left:88px;top:162px;height:18px;line-height:18px;font-size:12.8px;color:#dadada;font-weight:400;white-space:nowrap;">Distribute</div>
<div class="a" style="left:37px;top:190px;height:18px;line-height:18px;font-size:12.2px;color:#d6d6d6;font-weight:400;white-space:nowrap;"><u>R</u>elative to:</div>
<div class="a" style="left:133px;top:187px;width:70px;height:23px;background:#3e3e3e;border:1px solid #2b2b2b;border-radius:3px;"></div>
<div class="a" style="left:137px;top:190px;height:18px;line-height:18px;font-size:12.4px;color:#d6d6d6;font-weight:400;white-space:nowrap;width:48px;overflow:hidden">First Sele</div>
<div class="a" style="left:184px;top:191px;width:1px;height:15px;background:#cfcfcf;border-radius:0px;"></div>
<svg class="a" style="left:187.0px;top:195.5px" width="10" height="7"><path d="M1,1 L5.0,6 L9,1" stroke="#9a9a9a" stroke-width="1.2" fill="none"/></svg>
<div class="a" style="left:37px;top:223px;height:18px;line-height:18px;font-size:12.2px;color:#d6d6d6;font-weight:400;white-space:nowrap;"><u>S</u>elected Guide:</div>
<div class="a" style="left:132px;top:217px;width:72px;height:28px;background:#3a3a3a;border:1px solid #2b2b2b;border-radius:3px;"></div>
<div class="a" style="left:134px;top:223px;height:18px;line-height:18px;font-size:12.4px;color:#d6d6d6;font-weight:400;white-space:nowrap;">ne Selected</div>
<div class="a" style="left:37px;top:256px;height:18px;line-height:18px;font-size:12.2px;color:#d6d6d6;font-weight:400;white-space:nowrap;"><u>A</u>lign Sides By:</div>
<div class="a" style="left:133px;top:253px;width:70px;height:23px;background:#3e3e3e;border:1px solid #2b2b2b;border-radius:3px;"></div>
<div class="a" style="left:137px;top:256px;height:18px;line-height:18px;font-size:12.4px;color:#d6d6d6;font-weight:400;white-space:nowrap;width:47px;overflow:hidden">Moving (</div>
<div class="a" style="left:184px;top:257px;width:1px;height:15px;background:#cfcfcf;border-radius:0px;"></div>
<svg class="a" style="left:187.0px;top:261.5px" width="10" height="7"><path d="M1,1 L5.0,6 L9,1" stroke="#9a9a9a" stroke-width="1.2" fill="none"/></svg>
<div class="a" style="left:49px;top:284px;width:22px;height:25px;background:#3a3a3a;border:1px solid #2a2a2a;border-radius:3px;"></div>
<svg class="a" style="left:51px;top:287px" width="18" height="18"><rect x="8" y="4" width="8" height="4" fill="#ddd"/><rect x="3" y="10" width="5" height="4" fill="#6a9ae0"/><path d="M8.5,2 V16" stroke="#f08010" stroke-width="1.4"/></svg>
<div class="a" style="left:79px;top:284px;width:22px;height:25px;background:#3a3a3a;border:1px solid #2a2a2a;border-radius:3px;"></div>
<svg class="a" style="left:81px;top:287px" width="18" height="18"><path d="M4.5,2 V16" stroke="#f08010" stroke-width="1.4"/><rect x="5" y="4" width="7" height="4" fill="#ddd"/><rect x="5" y="10" width="10" height="4" fill="#ddd"/></svg>
<div class="a" style="left:109px;top:284px;width:22px;height:25px;background:#3a3a3a;border:1px solid #2a2a2a;border-radius:3px;"></div>
<svg class="a" style="left:111px;top:287px" width="18" height="18"><rect x="6" y="4" width="6" height="4" fill="#ddd"/><rect x="4" y="10" width="10" height="4" fill="#ddd"/><path d="M9,2 V16" stroke="#f08010" stroke-width="1.2" stroke-dasharray="2,1"/><circle cx="9" cy="6" r="1" fill="#f08010"/><circle cx="9" cy="12" r="1" fill="#f08010"/></svg>
<div class="a" style="left:139px;top:284px;width:22px;height:25px;background:#3a3a3a;border:1px solid #2a2a2a;border-radius:3px;"></div>
<svg class="a" style="left:141px;top:287px" width="18" height="18"><path d="M13.5,2 V16" stroke="#f08010" stroke-width="1.4"/><rect x="6" y="4" width="7" height="4" fill="#ddd"/><rect x="3" y="10" width="10" height="4" fill="#ddd"/></svg>
<div class="a" style="left:169px;top:284px;width:22px;height:25px;background:#3a3a3a;border:1px solid #2a2a2a;border-radius:3px;"></div>
<svg class="a" style="left:171px;top:287px" width="18" height="18"><rect x="10" y="3" width="4" height="4" fill="#6a9ae0"/><rect x="4" y="9" width="5" height="4" fill="#ddd"/><path d="M9.5,2 V16" stroke="#f08010" stroke-width="1.4"/></svg>
<div class="a" style="left:49px;top:315px;width:22px;height:25px;background:#3a3a3a;border:1px solid #2a2a2a;border-radius:3px;"></div>
<svg class="a" style="left:51px;top:318px" width="18" height="18"><rect x="4" y="2" width="4" height="4" fill="#6a9ae0"/><rect x="10" y="9" width="4" height="6" fill="#ddd"/><path d="M3,8.5 H16" stroke="#f08010" stroke-width="1.4"/></svg>
<div class="a" style="left:79px;top:315px;width:22px;height:25px;background:#3a3a3a;border:1px solid #2a2a2a;border-radius:3px;"></div>
<svg class="a" style="left:81px;top:318px" width="18" height="18"><path d="M3,3.5 H16" stroke="#f08010" stroke-width="1.4"/><rect x="5" y="4" width="4" height="10" fill="#ddd"/><rect x="11" y="4" width="4" height="6" fill="#ddd"/></svg>
<div class="a" style="left:109px;top:315px;width:22px;height:25px;background:#3a3a3a;border:1px solid #2a2a2a;border-radius:3px;"></div>
<svg class="a" style="left:111px;top:318px" width="18" height="18"><rect x="5" y="4" width="4" height="10" fill="#ddd"/><rect x="10" y="6" width="4" height="6" fill="#ddd"/><path d="M2,9 H16" stroke="#f08010" stroke-width="1.2" stroke-dasharray="2,1"/><circle cx="7" cy="9" r="1" fill="#f08010"/><circle cx="12" cy="9" r="1" fill="#f08010"/></svg>
<div class="a" style="left:139px;top:315px;width:22px;height:25px;background:#3a3a3a;border:1px solid #2a2a2a;border-radius:3px;"></div>
<svg class="a" style="left:141px;top:318px" width="18" height="18"><rect x="5" y="3" width="4" height="11" fill="#ddd"/><rect x="10" y="8" width="4" height="6" fill="#ddd"/><path d="M3,14.5 H16" stroke="#f08010" stroke-width="1.4"/></svg>
<div class="a" style="left:169px;top:315px;width:22px;height:25px;background:#3a3a3a;border:1px solid #2a2a2a;border-radius:3px;"></div>
<svg class="a" style="left:171px;top:318px" width="18" height="18"><rect x="4" y="3" width="4" height="6" fill="#ddd"/><rect x="10" y="10" width="4" height="4" fill="#6a9ae0"/><path d="M3,9.5 H16" stroke="#f08010" stroke-width="1.4"/></svg>
<div class="a" style="left:1030px;top:101px;width:320px;height:284px;background:#3a3a3a;border-radius:0px;box-shadow:0 1px 4px rgba(0,0,0,.45)"></div>
<div class="a" style="left:1030px;top:101px;width:320px;height:24px;background:#2f2f2f;border-radius:0px;"></div>
<div class="a" style="left:1030px;top:105px;height:18px;line-height:18px;font-size:12.1px;color:#e4e4e4;font-weight:700;white-space:nowrap;width:320px;text-align:center">Preflight Verifier</div>
<svg class="a" style="left:1327px;top:106px" width="14" height="14"><circle cx="7" cy="7" r="7" fill="#5f5f5f"/><path d="M4,4 L10,10 M10,4 L4,10" stroke="#2b2b2b" stroke-width="1.6"/></svg>
<div class="a" style="left:1035px;top:134px;height:18px;line-height:18px;font-size:12.6px;color:#d8d8d8;font-weight:400;white-space:nowrap;">Current Profile:</div>
<div class="a" style="left:1195px;top:131px;width:149px;height:24px;background:#3f3f3f;border:1px solid #2c2c2c;border-radius:3px;"></div>
<div class="a" style="left:1198px;top:134px;height:18px;line-height:18px;font-size:12.6px;color:#d8d8d8;font-weight:400;white-space:nowrap;">PDF 1.4</div>
<div class="a" style="left:1325px;top:135px;width:1px;height:16px;background:#2a2a2a;border-radius:0px;"></div>
<svg class="a" style="left:1328.0px;top:139.5px" width="10" height="7"><path d="M1,1 L5.0,6 L9,1" stroke="#9a9a9a" stroke-width="1.2" fill="none"/></svg>
<div class="a" style="left:1035px;top:160px;width:310px;height:186px;background:#404040;border:1px solid #333333;border-radius:0px;"></div>
<div class="a" style="left:1036px;top:161px;width:308px;height:25px;background:#3a3a3a;border-radius:0px;border-bottom:1px solid #2c2c2c"></div>
<div class="a" style="left:1144px;top:161px;width:1px;height:25px;background:#2c2c2c;border-radius:0px;"></div>
<div class="a" style="left:1261px;top:161px;width:1px;height:25px;background:#2c2c2c;border-radius:0px;"></div>
<div class="a" style="left:1040px;top:165px;height:18px;line-height:18px;font-size:12.6px;color:#d8d8d8;font-weight:400;white-space:nowrap;">Items</div>
<div class="a" style="left:1149px;top:165px;height:18px;line-height:18px;font-size:12.6px;color:#d8d8d8;font-weight:400;white-space:nowrap;">Problems</div>
<div class="a" style="left:1266px;top:165px;height:18px;line-height:18px;font-size:12.6px;color:#d8d8d8;font-weight:400;white-space:nowrap;">Layer</div>
<svg class="a" style="left:1058px;top:188px" width="16" height="12"><path d="M1,6 L5,11 L15,1 L5,8 Z" fill="#10c010"/></svg>
<div class="a" style="left:1081px;top:187px;height:18px;line-height:18px;font-size:12.5px;color:#dadada;font-weight:400;white-space:nowrap;">Document</div>
<div class="a" style="left:1148px;top:187px;height:18px;line-height:18px;font-size:12.6px;color:#dadada;font-weight:400;white-space:nowrap;">No Problems found</div>
<div class="a" style="left:1037px;top:352px;width:87px;height:28px;background:#3f3f3f;border:1px solid #2c2c2c;border-radius:3px;"></div>
<div class="a" style="left:1037px;top:357px;height:18px;line-height:18px;font-size:12.6px;color:#dadada;font-weight:400;white-space:nowrap;width:87px;text-align:center">Check again</div>
<div class="a" style="left:1228px;top:527px;width:124px;height:285px;background:#393939;border-radius:0px;box-shadow:0 1px 4px rgba(0,0,0,.45)"></div>
<div class="a" style="left:1228px;top:527px;width:124px;height:23px;background:#2f2f2f;border-radius:0px;"></div>
<div class="a" style="left:1322px;top:531px;height:18px;line-height:18px;font-size:12.1px;color:#e4e4e4;font-weight:700;white-space:nowrap;">Actio</div>
<div class="a" style="left:1236px;top:559px;width:14px;height:14px;background:#2e2e2e;border:1px solid #333;border-radius:2px;"></div>
<div class="a" style="left:1257px;top:558px;height:18px;line-height:18px;font-size:12.6px;color:#d8d8d8;font-weight:400;white-space:nowrap;">Show Selected O</div>
<div class="a" style="left:1233px;top:582px;width:119px;height:193px;background:#3c3c3c;border:1px solid #2b2b2b;border-radius:0px;"></div>
<div class="a" style="left:1234px;top:737px;width:118px;height:36px;background:#7e9c68;border-radius:0px;"></div>
<div class="a" style="left:1259px;top:594px;height:18px;line-height:18px;font-size:12.6px;color:#dedede;font-weight:400;white-space:nowrap;">Page 1 - Paste</div>
<svg class="a" style="left:1238px;top:603px" width="14" height="16"><rect x="0.5" y="2" width="13" height="13.5" rx="1" fill="#c8862a" stroke="#8a5a10" stroke-width=".6"/><rect x="3" y="3.5" width="8" height="11" fill="#eee"/><rect x="4.5" y="0.5" width="5" height="3" fill="#999"/></svg>
<div class="a" style="left:1259px;top:630px;height:18px;line-height:18px;font-size:12.6px;color:#dedede;font-weight:400;white-space:nowrap;">Text32 - Resize</div>
<svg class="a" style="left:1238px;top:639px" width="16" height="16"><rect x="0.5" y="1" width="13" height="14" fill="#f2f2f2" stroke="#aaa" stroke-width=".6" opacity="1"/><text x="1.5" y="7" font-size="7" font-weight="bold" fill="#333" font-family="Liberation Sans" opacity="1">A</text><path d="M7,3 H12 M7,5.5 H12 M2,9 H12 M2,12 H12" stroke="#333" stroke-width="1" opacity="1"/><path d="M13,5 V15 M11.5,13 L13,15 L14.5,13" stroke="#111" stroke-width="1.2" fill="none"/></svg>
<div class="a" style="left:1259px;top:666px;height:18px;line-height:18px;font-size:12.6px;color:#dedede;font-weight:400;white-space:nowrap;">Text32 - Edit tex</div>
<svg class="a" style="left:1238px;top:675px" width="16" height="16"><rect x="0.5" y="1" width="13" height="14" fill="#f2f2f2" stroke="#aaa" stroke-width=".6" opacity="1"/><text x="1.5" y="7" font-size="7" font-weight="bold" fill="#333" font-family="Liberation Sans" opacity="1">A</text><path d="M7,3 H12 M7,5.5 H12 M2,9 H12 M2,12 H12" stroke="#333" stroke-width="1" opacity="1"/></svg>
<div class="a" style="left:1259px;top:702px;height:18px;line-height:18px;font-size:12.6px;color:#dedede;font-weight:400;white-space:nowrap;">Text32 - Edit tex</div>
<svg class="a" style="left:1238px;top:711px" width="16" height="16"><rect x="0.5" y="1" width="13" height="14" fill="#f2f2f2" stroke="#aaa" stroke-width=".6" opacity="1"/><text x="1.5" y="7" font-size="7" font-weight="bold" fill="#333" font-family="Liberation Sans" opacity="1">A</text><path d="M7,3 H12 M7,5.5 H12 M2,9 H12 M2,12 H12" stroke="#333" stroke-width="1" opacity="1"/></svg>
<div class="a" style="left:1259px;top:738px;height:18px;line-height:18px;font-size:12.6px;color:#dedede;font-weight:400;white-space:nowrap;">Text32 - Move</div>
<svg class="a" style="left:1238px;top:747px" width="16" height="16"><rect x="0.5" y="1" width="13" height="14" fill="#f2f2f2" stroke="#aaa" stroke-width=".6" opacity="0.55"/><text x="1.5" y="7" font-size="7" font-weight="bold" fill="#333" font-family="Liberation Sans" opacity="0.55">A</text><path d="M7,3 H12 M7,5.5 H12 M2,9 H12 M2,12 H12" stroke="#333" stroke-width="1" opacity="0.55"/><path d="M9,6 V16 M4,11 H14" stroke="#111" stroke-width="1.2"/></svg>
<div class="a" style="left:1234px;top:780px;width:118px;height:28px;background:#3e3e3e;border:1px solid #2c2c2c;border-radius:3px;"></div>
<svg class="a" style="left:1270px;top:785px" width="17" height="17"><path d="M6,1 L1,6 L6,11 L6,8 C10,8 12,10 11,16 C16,11 14,4 6,4 Z" fill="#f0d020" stroke="#a08010" stroke-width=".6"/></svg>
<div class="a" style="left:1288px;top:785px;height:18px;line-height:18px;font-size:12.8px;color:#dedede;font-weight:400;white-space:nowrap;"><u>U</u>ndo</div>
<div class="a" style="left:1350px;top:72px;width:241px;height:740px;background:#363636;border-radius:0px;box-shadow:0 1px 4px rgba(0,0,0,.45)"></div>
<div class="a" style="left:1350px;top:72px;width:241px;height:24px;background:#2f2f2f;border-radius:0px;"></div>
<div class="a" style="left:1350px;top:76px;height:18px;line-height:18px;font-size:12.1px;color:#e4e4e4;font-weight:700;white-space:nowrap;width:241px;text-align:center">Properties</div>
<svg class="a" style="left:1568px;top:77px" width="14" height="14"><circle cx="7" cy="7" r="7" fill="#5f5f5f"/><path d="M4,4 L10,10 M10,4 L4,10" stroke="#2b2b2b" stroke-width="1.6"/></svg>
<div class="a" style="left:1591px;top:97px;width:5px;height:546px;background:#5f5f5f;border-radius:3px;"></div>
<div class="a" style="left:1597px;top:97px;width:3px;height:715px;background:#363636;border-radius:0px;"></div>
<div class="a" style="left:1355px;top:101px;width:231px;height:25px;background:#333333;border:1px solid #2b2b2b;border-radius:0px;"></div>
<div class="a" style="left:1359px;top:105px;height:18px;line-height:18px;font-size:12.8px;color:#dadada;font-weight:400;white-space:nowrap;">X, Y, <u>Z</u></div>
<div class="a" style="left:1355px;top:134px;height:18px;line-height:18px;font-size:12.6px;color:#dcdcdc;font-weight:700;white-space:nowrap;">Name</div>
<div class="a" style="left:1368px;top:153px;width:213px;height:29px;background:#363636;border:1px solid #2a2a2a;border-radius:4px;"></div>
<div class="a" style="left:1374px;top:159px;height:18px;line-height:18px;font-size:12.8px;color:#d8d8d8;font-weight:400;white-space:nowrap;">Image2</div>
<div class="a" style="left:1355px;top:196px;height:18px;line-height:18px;font-size:12.6px;color:#dcdcdc;font-weight:700;white-space:nowrap;">Geometry</div>
<div class="a" style="left:1368px;top:221px;height:18px;line-height:18px;font-size:12.6px;color:#d8d8d8;font-weight:400;white-space:nowrap;"><u>X</u>-Pos:</div>
<div class="a" style="left:1433px;top:215px;width:136px;height:28px;background:#363636;border:1px solid #2a2a2a;border-radius:3px;"></div>
<div class="a" style="left:1437px;top:219px;width:108px;height:20px;background:#3b3b3b;border-radius:0px;"></div>
<div class="a" style="left:1549px;top:216px;width:1px;height:26px;background:#2a2a2a;border-radius:0px;"></div>
<div class="a" style="left:1442px;top:221px;height:18px;line-height:18px;font-size:12.8px;color:#d8d8d8;font-weight:400;white-space:nowrap;">148.500 mm</div>
<svg class="a" style="left:1554px;top:220px" width="10" height="6"><path d="M1,5 L5,1 L9,5" stroke="#9a9a9a" stroke-width="1.1" fill="none"/></svg>
<svg class="a" style="left:1554.0px;top:231.5px" width="10" height="7"><path d="M1,1 L5.0,6 L9,1" stroke="#9a9a9a" stroke-width="1.2" fill="none"/></svg>
<div class="a" style="left:1368px;top:254px;height:18px;line-height:18px;font-size:12.6px;color:#d8d8d8;font-weight:400;white-space:nowrap;"><u>Y</u>-Pos:</div>
<div class="a" style="left:1433px;top:248px;width:136px;height:28px;background:#363636;border:1px solid #2a2a2a;border-radius:3px;"></div>
<div class="a" style="left:1437px;top:252px;width:108px;height:20px;background:#3b3b3b;border-radius:0px;"></div>
<div class="a" style="left:1549px;top:249px;width:1px;height:26px;background:#2a2a2a;border-radius:0px;"></div>
<div class="a" style="left:1442px;top:254px;height:18px;line-height:18px;font-size:12.8px;color:#d8d8d8;font-weight:400;white-space:nowrap;">55.739 mm</div>
<svg class="a" style="left:1554px;top:253px" width="10" height="6"><path d="M1,5 L5,1 L9,5" stroke="#9a9a9a" stroke-width="1.1" fill="none"/></svg>
<svg class="a" style="left:1554.0px;top:264.5px" width="10" height="7"><path d="M1,1 L5.0,6 L9,1" stroke="#9a9a9a" stroke-width="1.2" fill="none"/></svg>
<div class="a" style="left:1368px;top:287px;height:18px;line-height:18px;font-size:12.6px;color:#d8d8d8;font-weight:400;white-space:nowrap;"><u>W</u>idth:</div>
<div class="a" style="left:1433px;top:281px;width:136px;height:28px;background:#363636;border:1px solid #2a2a2a;border-radius:3px;"></div>
<div class="a" style="left:1437px;top:285px;width:108px;height:20px;background:#3b3b3b;border-radius:0px;"></div>
<div class="a" style="left:1549px;top:282px;width:1px;height:26px;background:#2a2a2a;border-radius:0px;"></div>
<div class="a" style="left:1442px;top:287px;height:18px;line-height:18px;font-size:12.8px;color:#d8d8d8;font-weight:400;white-space:nowrap;">297.000 mm</div>
<svg class="a" style="left:1554px;top:286px" width="10" height="6"><path d="M1,5 L5,1 L9,5" stroke="#9a9a9a" stroke-width="1.1" fill="none"/></svg>
<svg class="a" style="left:1554.0px;top:297.5px" width="10" height="7"><path d="M1,1 L5.0,6 L9,1" stroke="#9a9a9a" stroke-width="1.2" fill="none"/></svg>
<div class="a" style="left:1368px;top:320px;height:18px;line-height:18px;font-size:12.6px;color:#d8d8d8;font-weight:400;white-space:nowrap;"><u>H</u>eight:</div>
<div class="a" style="left:1433px;top:314px;width:136px;height:28px;background:#363636;border:1px solid #2a2a2a;border-radius:3px;"></div>
<div class="a" style="left:1437px;top:318px;width:108px;height:20px;background:#3b3b3b;border-radius:0px;"></div>
<div class="a" style="left:1549px;top:315px;width:1px;height:26px;background:#2a2a2a;border-radius:0px;"></div>
<div class="a" style="left:1442px;top:320px;height:18px;line-height:18px;font-size:12.8px;color:#d8d8d8;font-weight:400;white-space:nowrap;">111.477 mm</div>
<svg class="a" style="left:1554px;top:319px" width="10" height="6"><path d="M1,5 L5,1 L9,5" stroke="#9a9a9a" stroke-width="1.1" fill="none"/></svg>
<svg class="a" style="left:1554.0px;top:330.5px" width="10" height="7"><path d="M1,1 L5.0,6 L9,1" stroke="#9a9a9a" stroke-width="1.2" fill="none"/></svg>
<div class="a" style="left:1368px;top:353px;height:18px;line-height:18px;font-size:12.6px;color:#d8d8d8;font-weight:400;white-space:nowrap;"><u>R</u>otation:</div>
<div class="a" style="left:1433px;top:347px;width:136px;height:28px;background:#363636;border:1px solid #2a2a2a;border-radius:3px;"></div>
<div class="a" style="left:1437px;top:351px;width:108px;height:20px;background:#3b3b3b;border-radius:0px;"></div>
<div class="a" style="left:1549px;top:348px;width:1px;height:26px;background:#2a2a2a;border-radius:0px;"></div>
<div class="a" style="left:1442px;top:353px;height:18px;line-height:18px;font-size:12.8px;color:#d8d8d8;font-weight:400;white-space:nowrap;">0.0 °</div>
<svg class="a" style="left:1554px;top:352px" width="10" height="6"><path d="M1,5 L5,1 L9,5" stroke="#9a9a9a" stroke-width="1.1" fill="none"/></svg>
<svg class="a" style="left:1554.0px;top:363.5px" width="10" height="7"><path d="M1,1 L5.0,6 L9,1" stroke="#9a9a9a" stroke-width="1.2" fill="none"/></svg>
<svg class="a" style="left:1572px;top:294px" width="10" height="36"><path d="M2,1 H6 V8 M6,28 V35 H2" stroke="#bbb" stroke-width="1.3" fill="none"/><path d="M4,11 C2,13 2,16 4,17 M4,19 C2,20 2,23 4,25" stroke="#aaa" stroke-width="1" fill="none"/></svg>
<div class="a" style="left:1368px;top:395px;height:18px;line-height:18px;font-size:12.6px;color:#d8d8d8;font-weight:400;white-space:nowrap;">Basepoint:</div>
<svg class="a" style="left:1433px;top:380px" width="46" height="46"><rect x="7.8" y="8" width="30.5" height="30.3" fill="none" stroke="#e0e0e0" stroke-width="1.6"/><g fill="#f4f4f4" stroke="#bbb" stroke-width=".8"><circle cx="7.8" cy="8" r="5.5"/><circle cx="38.3" cy="8" r="5.5"/><circle cx="7.8" cy="38.3" r="5.5"/><circle cx="38.3" cy="38.3" r="5.5"/></g><circle cx="23" cy="23" r="4.3" fill="#c8c8c8" stroke="#eee" stroke-width="1.5"/></svg>
<div class="a" style="left:1355px;top:442px;height:18px;line-height:18px;font-size:12.6px;color:#dcdcdc;font-weight:700;white-space:nowrap;">Level</div>
<div class="a" style="left:1370px;top:462px;width:19px;height:21px;background:#3a3a3a;border:1px solid #2a2a2a;border-radius:3px;"></div>
<svg class="a" style="left:1370px;top:462px" width="19" height="21"><path d="M9.5,3 L16,10 L12.5,10 L12.5,17 L6.5,17 L6.5,10 L3,10 Z" fill="#6ed040" stroke="#2a8a10" stroke-width=".7"/></svg>
<div class="a" style="left:1396px;top:462px;width:19px;height:21px;background:#3a3a3a;border:1px solid #2a2a2a;border-radius:3px;"></div>
<svg class="a" style="left:1396px;top:462px" width="19" height="21"><path d="M9.5,3 L16,10 L12.5,10 L12.5,17 L6.5,17 L6.5,10 L3,10 Z" fill="#6ed040" stroke="#2a8a10" stroke-width=".7"/><path d="M3,2 H16" stroke="#2a8a10" stroke-width="1.2"/></svg>
<div class="a" style="left:1370px;top:488px;width:19px;height:21px;background:#3a3a3a;border:1px solid #2a2a2a;border-radius:3px;"></div>
<svg class="a" style="left:1370px;top:488px" width="19" height="21"><path d="M9.5,18 L16,11 L12.5,11 L12.5,4 L6.5,4 L6.5,11 L3,11 Z" fill="#6ed040" stroke="#2a8a10" stroke-width=".7"/></svg>
<div class="a" style="left:1396px;top:488px;width:19px;height:21px;background:#3a3a3a;border:1px solid #2a2a2a;border-radius:3px;"></div>
<svg class="a" style="left:1396px;top:488px" width="19" height="21"><path d="M9.5,18 L16,11 L12.5,11 L12.5,4 L6.5,4 L6.5,11 L3,11 Z" fill="#6ed040" stroke="#2a8a10" stroke-width=".7"/><path d="M3,19 H16" stroke="#2a8a10" stroke-width="1.2"/></svg>
<div class="a" style="left:1420px;top:476px;height:18px;line-height:18px;font-size:12.8px;color:#d8d8d8;font-weight:400;white-space:nowrap;">2</div>
<div class="a" style="left:1475px;top:449px;width:20px;height:24px;background:#3a3a3a;border:1px solid #2a2a2a;border-radius:3px;"></div>
<svg class="a" style="left:1475px;top:449px" width="20" height="24"><rect x="3" y="7" width="6" height="9" fill="#777"/><circle cx="12" cy="9" r="4" fill="#666"/><rect x="9" y="10" width="6" height="7" fill="#6a6a6a"/></svg>
<div class="a" style="left:1503px;top:449px;width:20px;height:24px;background:#3a3a3a;border:1px solid #2a2a2a;border-radius:3px;"></div>
<svg class="a" style="left:1503px;top:449px" width="20" height="24"><path d="M2,12 L6,8 L6,10.5 L14,10.5 L14,8 L18,12 L14,16 L14,13.5 L6,13.5 L6,16 Z" fill="#7aa6ec" stroke="#3a6ab8" stroke-width=".6"/></svg>
<div class="a" style="left:1531px;top:449px;width:20px;height:24px;background:#3a3a3a;border:1px solid #2a2a2a;border-radius:3px;"></div>
<svg class="a" style="left:1531px;top:449px" width="20" height="24"><rect x="2" y="11" width="12" height="9" fill="#e8d030" stroke="#a89010" stroke-width=".7"/><path d="M11,11 V7 C11,3 17,3 17,7 V9" stroke="#bbb" stroke-width="1.6" fill="none"/></svg>
<div class="a" style="left:1559px;top:449px;width:20px;height:24px;background:#3a3a3a;border:1px solid #2a2a2a;border-radius:3px;"></div>
<svg class="a" style="left:1559px;top:449px" width="20" height="24"><rect x="2.5" y="5.5" width="15" height="13" fill="#fff" stroke="#000" stroke-width="2.2" stroke-dasharray="3,1"/><rect x="5" y="8" width="10" height="8" fill="#fff"/></svg>
<div class="a" style="left:1475px;top:481px;width:20px;height:24px;background:#3a3a3a;border:1px solid #2a2a2a;border-radius:3px;"></div>
<svg class="a" style="left:1475px;top:481px" width="20" height="24"><rect x="4" y="9" width="5" height="7" fill="#777"/><circle cx="12" cy="10" r="3" fill="#666"/><rect x="9" y="11" width="4" height="5" fill="#6a6a6a"/></svg>
<div class="a" style="left:1503px;top:481px;width:20px;height:24px;background:#3a3a3a;border:1px solid #2a2a2a;border-radius:3px;"></div>
<svg class="a" style="left:1503px;top:481px" width="20" height="24"><path d="M10,3 L14,7 L11.5,7 L11.5,17 L14,17 L10,21 L6,17 L8.5,17 L8.5,7 L6,7 Z" fill="#7aa6ec" stroke="#3a6ab8" stroke-width=".6"/></svg>
<div class="a" style="left:1531px;top:481px;width:20px;height:24px;background:#3a3a3a;border:1px solid #2a2a2a;border-radius:3px;"></div>
<svg class="a" style="left:1531px;top:481px" width="20" height="24"><rect x="5" y="4" width="10" height="7" fill="#e6e6e6" stroke="#aaa" stroke-width=".6"/><rect x="2.5" y="11" width="15" height="8" fill="#d8d8d8" stroke="#999" stroke-width=".6"/><rect x="5" y="14" width="10" height="1.2" fill="#777"/></svg>
<div class="a" style="left:1355px;top:627px;width:231px;height:25px;background:#333333;border:1px solid #2b2b2b;border-radius:0px;"></div>
<div class="a" style="left:1359px;top:631.5px;height:18px;line-height:18px;font-size:12.8px;color:#d8d8d8;font-weight:400;white-space:nowrap;"><u>S</u>hape</div>
<div class="a" style="left:1355px;top:658px;width:231px;height:25px;background:#333333;border:1px solid #2b2b2b;border-radius:0px;"></div>
<div class="a" style="left:1359px;top:662.5px;height:18px;line-height:18px;font-size:12.8px;color:#7c7c7c;font-weight:400;white-space:nowrap;"><u>G</u>roup</div>
<div class="a" style="left:1355px;top:689px;width:231px;height:25px;background:#333333;border:1px solid #2b2b2b;border-radius:0px;"></div>
<div class="a" style="left:1359px;top:693.5px;height:18px;line-height:18px;font-size:12.8px;color:#7c7c7c;font-weight:400;white-space:nowrap;"><u>T</u>ext</div>
<div class="a" style="left:1355px;top:720px;width:231px;height:25px;background:#333333;border:1px solid #2b2b2b;border-radius:0px;"></div>
<div class="a" style="left:1359px;top:724.5px;height:18px;line-height:18px;font-size:12.8px;color:#d8d8d8;font-weight:400;white-space:nowrap;"><u>I</u>mage</div>
<div class="a" style="left:1355px;top:751px;width:231px;height:25px;background:#333333;border:1px solid #2b2b2b;border-radius:0px;"></div>
<div class="a" style="left:1359px;top:755.5px;height:18px;line-height:18px;font-size:12.8px;color:#d8d8d8;font-weight:400;white-space:nowrap;"><u>L</u>ine</div>
<div class="a" style="left:1355px;top:782px;width:231px;height:25px;background:#333333;border:1px solid #2b2b2b;border-radius:0px;"></div>
<div class="a" style="left:1359px;top:786.5px;height:18px;line-height:18px;font-size:12.8px;color:#d8d8d8;font-weight:400;white-space:nowrap;"><u>C</u>olors</div>
</body></html>
